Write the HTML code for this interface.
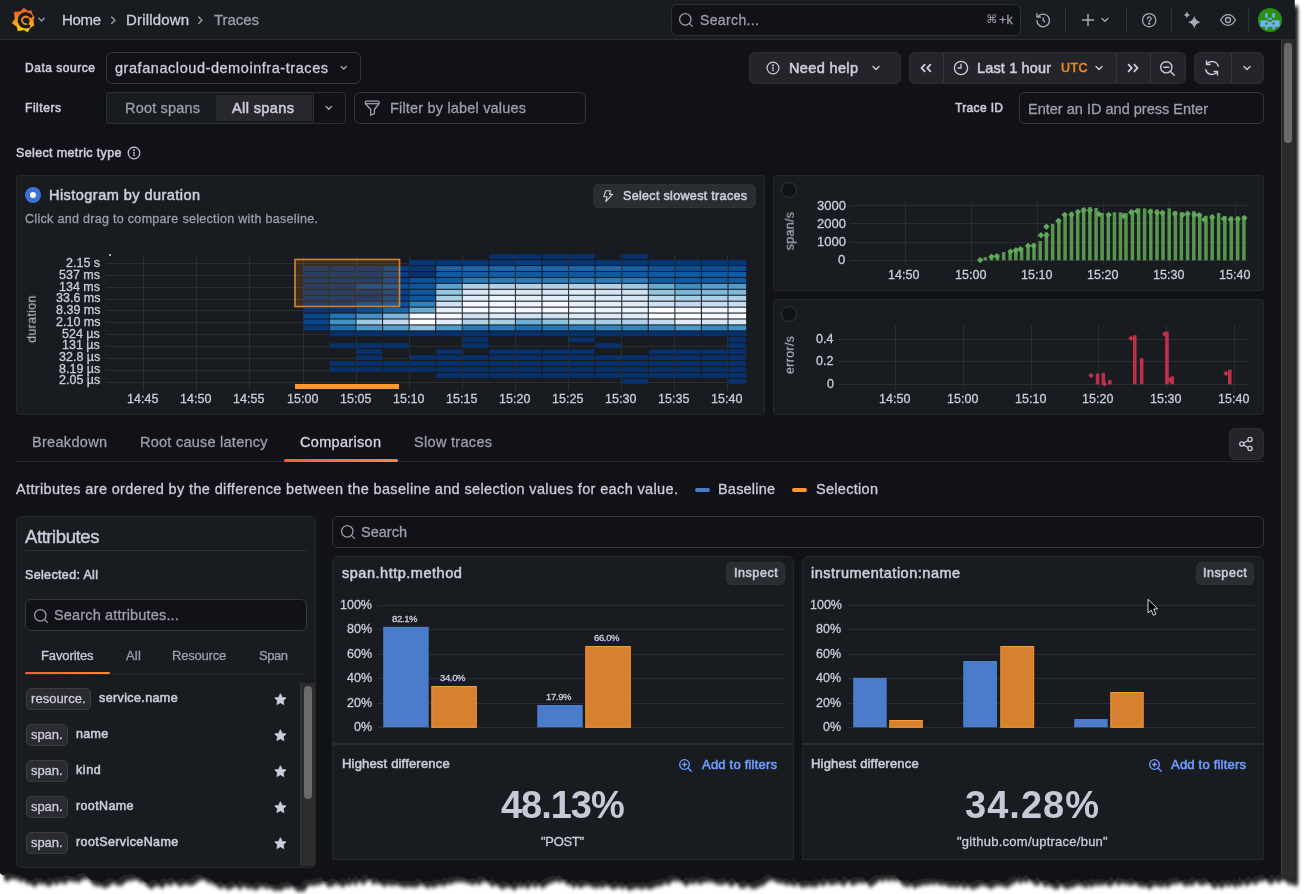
<!DOCTYPE html>
<html><head><meta charset="utf-8"><title>Drilldown Traces</title>
<style>
*{box-sizing:border-box;margin:0;padding:0}
html,body{width:1305px;height:894px;overflow:hidden;background:#fff}
body{font-family:"Liberation Sans",sans-serif;color:#ccccdc;font-size:14px;position:relative}
#app{position:absolute;left:0;top:0;width:1295px;height:894px;background:#111217;overflow:hidden}
.abs{position:absolute}
.t{position:absolute;white-space:nowrap;line-height:1}
.hdr{position:absolute;left:0;top:0;width:1295px;height:40px;background:#181b1f;border-bottom:1px solid #2a2c32}
.box{position:absolute;border:1px solid #34363d;border-radius:6px;background:#111217}
.btn{position:absolute;border:1px solid #2b2d33;border-radius:6px;background:#24252b}
.panel{position:absolute;border:1px solid #25272d;border-radius:3px;background:#181b1f}
.sec{color:#9a9ba8}
.b{font-weight:bold}
.vdiv{position:absolute;width:1px;background:#2f3137}
svg{position:absolute;overflow:visible}
.t{will-change:transform}
#app{clip-path:path("M0 0 L0 873.3 L0.0 873.3 L2.4 875.2 L4.6 874.9 L7.5 872.9 L10.7 873.3 L13.8 873.8 L16.1 875.8 L20.1 875.0 L22.7 877.8 L27.0 878.2 L30.0 880.5 L32.2 880.2 L34.9 877.2 L37.2 878.3 L41.2 878.3 L44.7 880.6 L47.6 879.6 L49.8 876.8 L52.3 879.3 L55.3 877.0 L58.8 877.0 L61.6 878.2 L65.3 874.8 L68.7 875.7 L72.9 876.1 L75.6 877.0 L77.9 874.0 L81.8 873.1 L85.1 873.6 L88.7 878.3 L92.2 880.0 L94.9 880.1 L98.4 880.7 L101.6 882.2 L105.9 879.8 L109.6 877.3 L113.3 879.5 L117.8 879.7 L120.5 877.2 L124.2 874.9 L127.4 875.1 L129.7 874.2 L133.6 874.1 L136.2 876.5 L140.4 876.8 L143.5 880.4 L147.7 882.9 L151.9 879.9 L154.9 880.1 L159.1 882.6 L161.5 878.6 L164.1 878.7 L167.3 880.1 L169.9 877.0 L173.0 878.5 L176.4 880.9 L180.1 878.4 L183.7 878.7 L185.8 879.5 L189.8 878.9 L193.8 876.1 L196.8 874.3 L200.3 873.9 L202.5 875.7 L204.9 877.5 L207.0 876.9 L209.4 878.6 L212.3 879.7 L216.5 883.0 L218.9 881.3 L221.8 881.8 L224.1 884.1 L228.5 882.3 L231.8 880.5 L234.0 881.7 L236.7 884.0 L239.1 880.2 L243.5 882.6 L245.8 882.7 L247.9 882.6 L252.3 884.2 L256.1 881.4 L259.0 881.0 L262.9 882.8 L266.9 881.9 L269.4 884.3 L273.9 884.6 L277.9 884.5 L281.8 881.8 L285.0 882.5 L287.1 880.9 L289.8 882.1 L293.6 885.5 L296.7 885.5 L301.1 885.1 L304.1 880.3 L306.6 879.0 L309.1 880.0 L313.4 879.1 L316.6 878.6 L320.6 876.4 L324.2 880.9 L328.2 880.6 L331.4 878.3 L335.4 879.1 L339.4 881.6 L342.3 878.5 L346.7 879.5 L349.1 876.3 L351.5 879.7 L355.5 875.5 L359.6 879.0 L363.2 875.5 L366.6 874.0 L368.6 878.6 L372.3 877.3 L376.6 878.0 L380.8 880.9 L383.3 878.8 L386.0 879.4 L389.5 879.7 L392.6 879.1 L396.8 880.2 L400.0 881.4 L404.2 880.7 L408.5 881.1 L411.9 881.3 L413.9 880.9 L416.4 878.8 L420.4 879.7 L423.5 882.4 L426.9 880.5 L430.2 881.7 L434.2 879.6 L437.6 879.2 L440.3 880.5 L443.6 878.1 L447.5 878.2 L450.6 876.5 L453.8 876.2 L457.6 876.1 L460.9 876.4 L465.2 877.7 L469.4 879.1 L472.1 877.4 L476.4 879.0 L478.8 875.7 L481.9 876.2 L484.5 876.7 L488.2 880.9 L492.4 878.8 L496.2 882.1 L498.6 883.6 L503.0 881.1 L507.4 881.8 L510.6 884.5 L514.7 880.3 L517.7 881.9 L520.6 880.3 L523.4 882.7 L525.4 881.8 L528.5 879.1 L531.4 881.9 L534.6 879.1 L539.1 882.4 L543.5 879.0 L546.2 877.8 L550.1 876.3 L552.5 875.4 L556.7 876.6 L559.4 874.9 L563.7 879.3 L567.4 879.0 L569.6 882.4 L572.7 879.5 L577.0 882.3 L581.0 879.7 L585.1 879.7 L589.3 881.6 L592.1 882.2 L596.5 880.9 L598.8 882.2 L601.4 880.2 L603.8 880.0 L606.3 881.3 L609.1 883.5 L611.8 882.3 L614.2 881.6 L616.3 881.2 L618.3 883.5 L621.7 881.0 L624.9 884.6 L627.1 884.0 L630.2 882.4 L634.3 882.0 L637.6 883.4 L642.0 881.7 L646.1 883.5 L649.7 882.0 L652.6 880.3 L654.9 880.4 L658.7 879.4 L661.2 877.4 L665.3 879.1 L668.9 874.9 L671.5 875.3 L674.7 875.2 L677.8 876.2 L682.2 880.4 L685.6 877.4 L690.0 878.1 L692.9 876.5 L695.8 878.6 L699.1 877.2 L702.4 876.1 L705.0 876.3 L708.0 875.9 L710.1 877.1 L712.6 878.3 L716.0 879.0 L719.6 878.6 L723.8 877.3 L726.6 880.7 L729.0 879.9 L732.6 877.3 L736.7 882.2 L740.3 882.1 L744.3 880.0 L747.6 882.4 L751.7 882.8 L755.8 880.4 L760.0 879.5 L763.7 876.0 L765.8 874.9 L768.7 874.0 L772.8 876.7 L776.4 877.6 L780.1 877.5 L782.1 879.3 L785.9 878.5 L789.3 879.7 L791.4 880.4 L794.1 877.6 L796.7 881.2 L799.3 881.6 L803.7 880.6 L806.7 880.2 L810.4 881.2 L813.9 880.3 L816.1 877.7 L818.7 880.3 L821.5 879.1 L823.5 876.5 L826.2 879.2 L829.9 878.8 L832.7 877.8 L835.8 877.3 L838.1 879.5 L840.6 880.0 L844.9 875.6 L848.1 879.7 L852.5 878.1 L855.2 877.1 L859.6 877.3 L863.0 877.1 L866.3 881.2 L868.6 880.0 L871.9 877.7 L875.7 874.5 L879.9 875.7 L882.0 873.4 L885.2 875.6 L888.0 874.1 L890.8 875.1 L894.9 874.5 L898.8 879.3 L901.1 880.2 L904.9 880.9 L907.6 878.9 L910.6 882.6 L914.1 880.2 L917.1 880.3 L919.3 879.0 L923.3 879.1 L927.7 878.1 L930.3 878.8 L932.8 877.6 L937.2 879.4 L941.2 878.8 L945.5 880.9 L948.9 880.4 L951.0 880.7 L954.2 881.3 L957.8 879.6 L959.9 883.0 L962.2 881.2 L965.1 880.5 L968.9 883.7 L971.6 882.1 L974.3 881.6 L977.3 879.6 L979.7 879.8 L984.0 881.1 L986.5 883.0 L991.0 880.8 L993.4 879.5 L995.6 880.2 L997.8 879.6 L1000.5 881.2 L1004.7 881.5 L1007.7 878.8 L1011.0 877.4 L1013.9 874.9 L1016.6 878.3 L1018.9 875.2 L1022.4 877.0 L1025.0 874.7 L1027.6 875.8 L1030.7 879.1 L1034.8 879.6 L1036.9 875.9 L1040.7 880.8 L1043.9 880.0 L1045.9 879.5 L1050.2 882.4 L1054.3 883.2 L1056.9 879.1 L1059.3 881.1 L1063.0 883.2 L1066.8 881.8 L1070.7 881.0 L1074.1 879.1 L1078.1 880.1 L1082.4 882.1 L1085.1 879.4 L1087.8 881.5 L1091.5 878.4 L1093.7 880.0 L1097.1 878.9 L1099.7 879.5 L1101.7 877.8 L1104.9 880.4 L1108.5 879.5 L1111.7 876.3 L1114.3 880.0 L1118.1 877.2 L1120.1 878.3 L1123.8 878.3 L1126.4 879.7 L1130.8 877.9 L1132.8 878.6 L1135.9 880.6 L1138.4 881.3 L1142.2 880.3 L1144.7 882.7 L1147.5 882.2 L1150.1 879.6 L1154.0 880.3 L1158.4 881.2 L1160.9 879.6 L1163.9 881.4 L1168.3 878.4 L1171.3 878.3 L1175.7 877.5 L1177.8 876.8 L1180.8 880.5 L1185.0 879.2 L1189.5 879.6 L1192.3 876.2 L1196.7 879.4 L1198.7 879.3 L1201.7 878.3 L1204.5 877.6 L1206.5 878.4 L1209.4 882.0 L1211.7 882.3 L1214.2 879.7 L1218.3 882.4 L1221.4 879.1 L1224.6 880.6 L1228.9 879.0 L1231.8 881.9 L1233.8 879.2 L1237.9 880.3 L1240.0 876.4 L1242.1 880.3 L1244.8 879.0 L1249.0 876.5 L1251.7 879.3 L1255.2 875.6 L1259.0 875.6 L1261.7 873.9 L1265.6 878.0 L1269.2 877.8 L1271.3 874.2 L1274.4 877.4 L1278.8 874.3 L1281.5 874.9 L1284.7 878.2 L1287.1 878.3 L1291.0 879.5 L1294.5 879.6 L1294.5 879.1 L1294.5 0 Z")}
</style></head>
<body>
<svg style="left:0;top:0" width="1305" height="894" viewBox="0 0 1305 894">
<defs><filter id="sh" x="-5%" y="-5%" width="110%" height="110%"><feGaussianBlur stdDeviation="1.8 2.3"/></filter></defs>
<path d="M0 0 L0 873.3 L0.0 873.3 L2.4 875.2 L4.6 874.9 L7.5 872.9 L10.7 873.3 L13.8 873.8 L16.1 875.8 L20.1 875.0 L22.7 877.8 L27.0 878.2 L30.0 880.5 L32.2 880.2 L34.9 877.2 L37.2 878.3 L41.2 878.3 L44.7 880.6 L47.6 879.6 L49.8 876.8 L52.3 879.3 L55.3 877.0 L58.8 877.0 L61.6 878.2 L65.3 874.8 L68.7 875.7 L72.9 876.1 L75.6 877.0 L77.9 874.0 L81.8 873.1 L85.1 873.6 L88.7 878.3 L92.2 880.0 L94.9 880.1 L98.4 880.7 L101.6 882.2 L105.9 879.8 L109.6 877.3 L113.3 879.5 L117.8 879.7 L120.5 877.2 L124.2 874.9 L127.4 875.1 L129.7 874.2 L133.6 874.1 L136.2 876.5 L140.4 876.8 L143.5 880.4 L147.7 882.9 L151.9 879.9 L154.9 880.1 L159.1 882.6 L161.5 878.6 L164.1 878.7 L167.3 880.1 L169.9 877.0 L173.0 878.5 L176.4 880.9 L180.1 878.4 L183.7 878.7 L185.8 879.5 L189.8 878.9 L193.8 876.1 L196.8 874.3 L200.3 873.9 L202.5 875.7 L204.9 877.5 L207.0 876.9 L209.4 878.6 L212.3 879.7 L216.5 883.0 L218.9 881.3 L221.8 881.8 L224.1 884.1 L228.5 882.3 L231.8 880.5 L234.0 881.7 L236.7 884.0 L239.1 880.2 L243.5 882.6 L245.8 882.7 L247.9 882.6 L252.3 884.2 L256.1 881.4 L259.0 881.0 L262.9 882.8 L266.9 881.9 L269.4 884.3 L273.9 884.6 L277.9 884.5 L281.8 881.8 L285.0 882.5 L287.1 880.9 L289.8 882.1 L293.6 885.5 L296.7 885.5 L301.1 885.1 L304.1 880.3 L306.6 879.0 L309.1 880.0 L313.4 879.1 L316.6 878.6 L320.6 876.4 L324.2 880.9 L328.2 880.6 L331.4 878.3 L335.4 879.1 L339.4 881.6 L342.3 878.5 L346.7 879.5 L349.1 876.3 L351.5 879.7 L355.5 875.5 L359.6 879.0 L363.2 875.5 L366.6 874.0 L368.6 878.6 L372.3 877.3 L376.6 878.0 L380.8 880.9 L383.3 878.8 L386.0 879.4 L389.5 879.7 L392.6 879.1 L396.8 880.2 L400.0 881.4 L404.2 880.7 L408.5 881.1 L411.9 881.3 L413.9 880.9 L416.4 878.8 L420.4 879.7 L423.5 882.4 L426.9 880.5 L430.2 881.7 L434.2 879.6 L437.6 879.2 L440.3 880.5 L443.6 878.1 L447.5 878.2 L450.6 876.5 L453.8 876.2 L457.6 876.1 L460.9 876.4 L465.2 877.7 L469.4 879.1 L472.1 877.4 L476.4 879.0 L478.8 875.7 L481.9 876.2 L484.5 876.7 L488.2 880.9 L492.4 878.8 L496.2 882.1 L498.6 883.6 L503.0 881.1 L507.4 881.8 L510.6 884.5 L514.7 880.3 L517.7 881.9 L520.6 880.3 L523.4 882.7 L525.4 881.8 L528.5 879.1 L531.4 881.9 L534.6 879.1 L539.1 882.4 L543.5 879.0 L546.2 877.8 L550.1 876.3 L552.5 875.4 L556.7 876.6 L559.4 874.9 L563.7 879.3 L567.4 879.0 L569.6 882.4 L572.7 879.5 L577.0 882.3 L581.0 879.7 L585.1 879.7 L589.3 881.6 L592.1 882.2 L596.5 880.9 L598.8 882.2 L601.4 880.2 L603.8 880.0 L606.3 881.3 L609.1 883.5 L611.8 882.3 L614.2 881.6 L616.3 881.2 L618.3 883.5 L621.7 881.0 L624.9 884.6 L627.1 884.0 L630.2 882.4 L634.3 882.0 L637.6 883.4 L642.0 881.7 L646.1 883.5 L649.7 882.0 L652.6 880.3 L654.9 880.4 L658.7 879.4 L661.2 877.4 L665.3 879.1 L668.9 874.9 L671.5 875.3 L674.7 875.2 L677.8 876.2 L682.2 880.4 L685.6 877.4 L690.0 878.1 L692.9 876.5 L695.8 878.6 L699.1 877.2 L702.4 876.1 L705.0 876.3 L708.0 875.9 L710.1 877.1 L712.6 878.3 L716.0 879.0 L719.6 878.6 L723.8 877.3 L726.6 880.7 L729.0 879.9 L732.6 877.3 L736.7 882.2 L740.3 882.1 L744.3 880.0 L747.6 882.4 L751.7 882.8 L755.8 880.4 L760.0 879.5 L763.7 876.0 L765.8 874.9 L768.7 874.0 L772.8 876.7 L776.4 877.6 L780.1 877.5 L782.1 879.3 L785.9 878.5 L789.3 879.7 L791.4 880.4 L794.1 877.6 L796.7 881.2 L799.3 881.6 L803.7 880.6 L806.7 880.2 L810.4 881.2 L813.9 880.3 L816.1 877.7 L818.7 880.3 L821.5 879.1 L823.5 876.5 L826.2 879.2 L829.9 878.8 L832.7 877.8 L835.8 877.3 L838.1 879.5 L840.6 880.0 L844.9 875.6 L848.1 879.7 L852.5 878.1 L855.2 877.1 L859.6 877.3 L863.0 877.1 L866.3 881.2 L868.6 880.0 L871.9 877.7 L875.7 874.5 L879.9 875.7 L882.0 873.4 L885.2 875.6 L888.0 874.1 L890.8 875.1 L894.9 874.5 L898.8 879.3 L901.1 880.2 L904.9 880.9 L907.6 878.9 L910.6 882.6 L914.1 880.2 L917.1 880.3 L919.3 879.0 L923.3 879.1 L927.7 878.1 L930.3 878.8 L932.8 877.6 L937.2 879.4 L941.2 878.8 L945.5 880.9 L948.9 880.4 L951.0 880.7 L954.2 881.3 L957.8 879.6 L959.9 883.0 L962.2 881.2 L965.1 880.5 L968.9 883.7 L971.6 882.1 L974.3 881.6 L977.3 879.6 L979.7 879.8 L984.0 881.1 L986.5 883.0 L991.0 880.8 L993.4 879.5 L995.6 880.2 L997.8 879.6 L1000.5 881.2 L1004.7 881.5 L1007.7 878.8 L1011.0 877.4 L1013.9 874.9 L1016.6 878.3 L1018.9 875.2 L1022.4 877.0 L1025.0 874.7 L1027.6 875.8 L1030.7 879.1 L1034.8 879.6 L1036.9 875.9 L1040.7 880.8 L1043.9 880.0 L1045.9 879.5 L1050.2 882.4 L1054.3 883.2 L1056.9 879.1 L1059.3 881.1 L1063.0 883.2 L1066.8 881.8 L1070.7 881.0 L1074.1 879.1 L1078.1 880.1 L1082.4 882.1 L1085.1 879.4 L1087.8 881.5 L1091.5 878.4 L1093.7 880.0 L1097.1 878.9 L1099.7 879.5 L1101.7 877.8 L1104.9 880.4 L1108.5 879.5 L1111.7 876.3 L1114.3 880.0 L1118.1 877.2 L1120.1 878.3 L1123.8 878.3 L1126.4 879.7 L1130.8 877.9 L1132.8 878.6 L1135.9 880.6 L1138.4 881.3 L1142.2 880.3 L1144.7 882.7 L1147.5 882.2 L1150.1 879.6 L1154.0 880.3 L1158.4 881.2 L1160.9 879.6 L1163.9 881.4 L1168.3 878.4 L1171.3 878.3 L1175.7 877.5 L1177.8 876.8 L1180.8 880.5 L1185.0 879.2 L1189.5 879.6 L1192.3 876.2 L1196.7 879.4 L1198.7 879.3 L1201.7 878.3 L1204.5 877.6 L1206.5 878.4 L1209.4 882.0 L1211.7 882.3 L1214.2 879.7 L1218.3 882.4 L1221.4 879.1 L1224.6 880.6 L1228.9 879.0 L1231.8 881.9 L1233.8 879.2 L1237.9 880.3 L1240.0 876.4 L1242.1 880.3 L1244.8 879.0 L1249.0 876.5 L1251.7 879.3 L1255.2 875.6 L1259.0 875.6 L1261.7 873.9 L1265.6 878.0 L1269.2 877.8 L1271.3 874.2 L1274.4 877.4 L1278.8 874.3 L1281.5 874.9 L1284.7 878.2 L1287.1 878.3 L1291.0 879.5 L1294.5 879.6 L1294.5 879.1 L1294.5 0 Z" transform="translate(3.800,6)" fill="#000" opacity="0.85" filter="url(#sh)"/>
</svg>
<div id="app">
<div class="hdr"></div>
<svg style="left:5px;top:2px" width="50" height="36" viewBox="0 0 1242 894">
<defs><linearGradient id="lg" gradientUnits="userSpaceOnUse" x1="0" y1="750" x2="0" y2="145"><stop offset="0" stop-color="#ffd70a"/><stop offset=".55" stop-color="#f78a1f"/><stop offset="1" stop-color="#f0562b"/></linearGradient></defs>
<path fill="url(#lg)" stroke="url(#lg)" stroke-width="14" stroke-linejoin="round" d="M470 150L565 222L655 218L672 295L722 372L700 455L716 580L622 640L560 745L470 690L322 716L302 612L176 520L252 422L230 252L372 244Z"/>
<path fill="none" stroke="#181b1f" stroke-width="88" stroke-linecap="round" d="M640 350A160 160 0 1 0 585 600"/>
<circle cx="525" cy="475" r="84" fill="#181b1f"/>
<path fill="none" stroke="#f9a015" stroke-width="34" stroke-linecap="round" d="M450 500Q470 560 530 545"/>
</svg>
<svg style="left:38.4px;top:17.4px" width="7.2" height="5.2" viewBox="-3.6 -2.6 7.2 5.2"><path d="M-2.6 -1.3L0 1.3L2.6 -1.3" fill="none" stroke="#9d9eab" stroke-width="1.4" stroke-linecap="round" stroke-linejoin="round"/></svg>
<div class="t" style="left:62.00px;top:12.35px;font-size:15px;color:#ccccdc;-webkit-text-stroke:0.3px;letter-spacing:-0.338px;">Home</div>
<svg style="left:109.7px;top:16.2px" width="6.6" height="8.6" viewBox="-3.3 -4.3 6.6 8.6"><path d="M-1.65 -3.3L1.65 0L-1.65 3.3" fill="none" stroke="#9d9eab" stroke-width="1.4" stroke-linecap="round" stroke-linejoin="round"/></svg>
<div class="t" style="left:126.00px;top:12.35px;font-size:15px;color:#ccccdc;-webkit-text-stroke:0.3px;letter-spacing:0.164px;">Drilldown</div>
<svg style="left:197.2px;top:16.2px" width="6.6" height="8.6" viewBox="-3.3 -4.3 6.6 8.6"><path d="M-1.65 -3.3L1.65 0L-1.65 3.3" fill="none" stroke="#9d9eab" stroke-width="1.4" stroke-linecap="round" stroke-linejoin="round"/></svg>
<div class="t" style="left:214.00px;top:12.35px;font-size:15px;color:#9d9eab;-webkit-text-stroke:0.3px;letter-spacing:-0.057px;">Traces</div>
<div class="box" style="left:671px;top:4px;width:350px;height:32px;border-color:#2e3036"></div>
<svg style="left:678px;top:12px" width="16" height="16" viewBox="-8 -8 16 16"><circle cx="-0.7" cy="-0.7" r="5.7" fill="none" stroke="#9d9eab" stroke-width="1.25"/><path d="M3.3298999999999994 3.3298999999999994L6.4 6.4" stroke="#9d9eab" stroke-width="1.25" stroke-linecap="round"/></svg>
<div class="t" style="left:700.00px;top:12.86px;font-size:14px;color:#9d9eab;-webkit-text-stroke:0.3px;letter-spacing:0.372px;">Search...</div>
<div class="t" style="left:986.200px;top:13.800px;font-size:11.500px;color:#9d9eab;font-family:'DejaVu Sans',sans-serif">&#8984;</div>
<div class="t" style="left:998.60px;top:13.62px;font-size:12.5px;color:#9d9eab;-webkit-text-stroke:0.3px;letter-spacing:0.250px;">+k</div>
<svg style="left:1034.800px;top:11.500px" width="16.400" height="16.400" viewBox="0 0 18 18" fill="none" stroke="#a9aab8" stroke-width="1.500" stroke-linecap="round" stroke-linejoin="round">
<path d="M3.300 5.200A7 7 0 1 1 2 9.400"/><path d="M2.200 1.800v3.700h3.700"/><path d="M9 6.500V9.300l1.600 1.200"/></svg>
<div class="vdiv" style="left:1065px;top:8px;height:24px"></div>
<svg style="left:1082px;top:14px" width="12" height="12" viewBox="0 0 12 12"><path d="M6 .5v11M.5 6h11" stroke="#a9aab8" stroke-width="1.500" stroke-linecap="round"/></svg>
<svg style="left:1100.6px;top:17.1px" width="7.8" height="5.8" viewBox="-3.9 -2.9 7.8 5.8"><path d="M-2.9 -1.45L0 1.45L2.9 -1.45" fill="none" stroke="#a9aab8" stroke-width="1.3" stroke-linecap="round" stroke-linejoin="round"/></svg>
<div class="vdiv" style="left:1126px;top:8px;height:24px"></div>
<svg style="left:1140.600px;top:11.800px" width="16.400" height="16.400" viewBox="0 0 18 18" fill="none" stroke="#a9aab8" stroke-width="1.400" stroke-linecap="round"><circle cx="9" cy="9" r="7.300"/><path d="M7.100 7.400a2 2 0 1 1 2.900 1.700c-.7.400-1 .8-1 1.500"/><circle cx="9" cy="12.700" r=".6" fill="#a9aab8"/></svg>
<div class="vdiv" style="left:1171px;top:8px;height:24px"></div>
<svg style="left:0;top:0" width="1295" height="40" viewBox="0 0 1295 40"><path d="M1194.3 15.799999999999999Q1195.3239999999998 21.176 1200.7 22.2Q1195.3239999999998 23.224 1194.3 28.6Q1193.276 23.224 1187.8999999999999 22.2Q1193.276 21.176 1194.3 15.799999999999999ZM1186.9 11.600000000000001Q1187.428 14.372 1190.2 14.9Q1187.428 15.428 1186.9 18.2Q1186.372 15.428 1183.6000000000001 14.9Q1186.372 14.372 1186.9 11.600000000000001Z" fill="#a9aab8"/></svg>
<svg style="left:1218px;top:10px" width="20" height="20" viewBox="1218 10 20 20" fill="none" stroke="#a9aab8" stroke-width="1.300"><path d="M1220.600 20C1222.700 16.300 1225.200 14.700 1228 14.700S1233.300 16.300 1235.400 20C1233.300 23.700 1230.800 25.300 1228 25.300S1222.700 23.700 1220.600 20Z" stroke-linejoin="round"/><circle cx="1228" cy="20" r="2.500"/></svg>
<div class="vdiv" style="left:1248px;top:8px;height:24px"></div>
<svg style="left:1258px;top:8px" width="24" height="24" viewBox="0 0 24 24"><defs><clipPath id="av"><circle cx="12" cy="12" r="12"/></clipPath></defs>
<circle cx="12" cy="12" r="12.050" fill="#2a8f10"/><g clip-path="url(#av)" fill="#73b0fb"><rect x="2.400" y="12.300" width="19.200" height="6.500"/><rect x="7.200" y="5.100" width="2.450" height="4.550"/><rect x="14.400" y="5.100" width="2.450" height="4.550"/><rect x="9.800" y="10" width="4.200" height="1.550"/><rect x="7.200" y="18.700" width="2.450" height="2.550"/><rect x="14.400" y="18.700" width="2.450" height="2.550"/></g>
<g fill="#2a8f10"><circle cx="8.350" cy="15.550" r="1.250"/><circle cx="15.550" cy="15.550" r="1.250"/><rect x="9.800" y="12.200" width="4.200" height="1.600"/></g></svg>
<div class="t" style="left:25.00px;top:61.88px;font-size:12px;color:#ccccdc;-webkit-text-stroke:0.55px;letter-spacing:0.530px;">Data source</div>
<div class="box" style="left:106px;top:52px;width:255px;height:32px"></div>
<div class="t" style="left:115.00px;top:60.60px;font-size:14.5px;color:#ccccdc;-webkit-text-stroke:0.3px;letter-spacing:0.555px;">grafanacloud-demoinfra-traces</div>
<svg style="left:339.8px;top:65.3px" width="7.4" height="5.4" viewBox="-3.7 -2.7 7.4 5.4"><path d="M-2.7 -1.35L0 1.35L2.7 -1.35" fill="none" stroke="#a9aab7" stroke-width="1.3" stroke-linecap="round" stroke-linejoin="round"/></svg>
<div class="t" style="left:25.00px;top:101.88px;font-size:12px;color:#ccccdc;-webkit-text-stroke:0.55px;letter-spacing:0.556px;">Filters</div>
<div class="box" style="left:106px;top:92px;width:240px;height:32px;border-radius:3px;background:#181b1f;border-color:#2e3036"></div>
<div class="abs" style="left:216px;top:95px;width:96px;height:26px;background:#26282e;border-radius:3px"></div>
<div class="t" style="left:125.00px;top:100.61px;font-size:14.5px;color:#9d9eab;-webkit-text-stroke:0.3px;letter-spacing:0.184px;">Root spans</div>
<div class="t" style="left:232.00px;top:100.61px;font-size:14.5px;color:#ccccdc;-webkit-text-stroke:0.55px;letter-spacing:0.396px;">All spans</div>
<div class="abs" style="left:313px;top:93px;width:32px;height:30px;background:#111217;border-left:1px solid #2e3036;border-radius:0 2px 2px 0"></div>
<svg style="left:324.9px;top:105.2px" width="7.6" height="5.6" viewBox="-3.8 -2.8 7.6 5.6"><path d="M-2.8 -1.4L0 1.4L2.8 -1.4" fill="none" stroke="#b4b5c3" stroke-width="1.3" stroke-linecap="round" stroke-linejoin="round"/></svg>
<div class="box" style="left:354px;top:92px;width:232px;height:32px"></div>
<svg style="left:360px;top:96px" width="24" height="24" viewBox="360 96 24 24" fill="none" stroke="#a4a5b2" stroke-width="1.250" stroke-linejoin="round"><path d="M365.300 102.300Q365.300 101 366.600 101H377.800Q379.100 101 379.100 102.300V103.500L374.400 109.500V113.600L370.700 115.200V109.500L365.300 103.500Z"/><path d="M365.600 103.700H378.800"/></svg>
<div class="t" style="left:390.00px;top:100.61px;font-size:14.5px;color:#9d9eab;-webkit-text-stroke:0.3px;letter-spacing:0.182px;">Filter by label values</div>
<div class="btn" style="left:749px;top:52px;width:152px;height:32px"></div>
<svg style="left:766px;top:61px" width="14" height="14" viewBox="0 0 14 14" fill="none" stroke="#ccccdc" stroke-width="1.200"><circle cx="7" cy="7" r="5.900"/><path d="M7 6.300v3.500" stroke-linecap="round"/><circle cx="7" cy="4.300" r=".4" fill="#ccccdc"/></svg>
<div class="t" style="left:789.00px;top:60.60px;font-size:14.5px;color:#ccccdc;-webkit-text-stroke:0.55px;letter-spacing:0.362px;">Need help</div>
<svg style="left:872px;top:65.2px" width="8" height="6" viewBox="-4 -3 8 6"><path d="M-3 -1.5L0 1.5L3 -1.5" fill="none" stroke="#ccccdc" stroke-width="1.4" stroke-linecap="round" stroke-linejoin="round"/></svg>
<div class="btn" style="left:909px;top:52px;width:277px;height:32px"></div>
<div class="vdiv" style="left:943px;top:53px;height:30px;background:#34363c"></div>
<div class="vdiv" style="left:1116px;top:53px;height:30px;background:#34363c"></div>
<div class="vdiv" style="left:1150px;top:53px;height:30px;background:#34363c"></div>
<svg style="left:917.6px;top:63px" width="16" height="10" viewBox="-8 -5 16 10" fill="none" stroke="#ccccdc" stroke-width="1.800" stroke-linecap="round" stroke-linejoin="round"><path d="M-1.30 -3.3L-4.50 0L-1.30 3.3M4.40 -3.3L1.20 0L4.40 3.3"/></svg>
<svg style="left:1125.2px;top:63px" width="16" height="10" viewBox="-8 -5 16 10" fill="none" stroke="#ccccdc" stroke-width="1.800" stroke-linecap="round" stroke-linejoin="round"><path d="M1.30 -3.3L4.50 0L1.30 3.3M-4.40 -3.3L-1.20 0L-4.40 3.3"/></svg>
<svg style="left:953px;top:60px" width="16" height="16" viewBox="0 0 16 16" fill="none" stroke="#ccccdc" stroke-width="1.300" stroke-linecap="round" stroke-linejoin="round"><circle cx="8" cy="8" r="6.600"/><path d="M8 4.200V8H5"/></svg>
<div class="t" style="left:977.00px;top:60.60px;font-size:14.5px;color:#ccccdc;-webkit-text-stroke:0.55px;letter-spacing:0.145px;">Last 1 hour</div>
<div class="t" style="left:1060.50px;top:61.62px;font-size:12.5px;color:#f58b1f;-webkit-text-stroke:0.55px;letter-spacing:0.405px;">UTC</div>
<svg style="left:1094.5px;top:65.2px" width="8" height="6" viewBox="-4 -3 8 6"><path d="M-3 -1.5L0 1.5L3 -1.5" fill="none" stroke="#ccccdc" stroke-width="1.4" stroke-linecap="round" stroke-linejoin="round"/></svg>
<svg style="left:1159px;top:60px" width="17" height="17" viewBox="0 0 17 17" fill="none" stroke="#ccccdc" stroke-width="1.400" stroke-linecap="round"><circle cx="7.300" cy="7.300" r="5.600"/><path d="M11.500 11.500L15.300 15.300M4.800 7.300h5"/></svg>
<div class="btn" style="left:1194px;top:52px;width:70px;height:32px"></div>
<div class="vdiv" style="left:1230.500px;top:53px;height:30px;background:#34363c"></div>
<svg style="left:1203px;top:59px" width="18" height="18" viewBox="0 0 18 18" fill="none" stroke="#ccccdc" stroke-width="1.400" stroke-linecap="round" stroke-linejoin="round"><path d="M15.300 7.200A6.500 6.500 0 0 0 3.800 5.200"/><path d="M2.700 10.800A6.500 6.500 0 0 0 14.200 12.800"/><path d="M3.500 2v3.500H7M14.500 16v-3.500H11"/></svg>
<svg style="left:1243px;top:65.2px" width="8" height="6" viewBox="-4 -3 8 6"><path d="M-3 -1.5L0 1.5L3 -1.5" fill="none" stroke="#ccccdc" stroke-width="1.4" stroke-linecap="round" stroke-linejoin="round"/></svg>
<div class="t" style="left:955.00px;top:101.88px;font-size:12px;color:#ccccdc;-webkit-text-stroke:0.55px;letter-spacing:0.348px;">Trace ID</div>
<div class="box" style="left:1019px;top:92px;width:245px;height:32px"></div>
<div class="t" style="left:1028.00px;top:102.11px;font-size:14.5px;color:#9d9eab;-webkit-text-stroke:0.3px;letter-spacing:0.010px;">Enter an ID and press Enter</div>
<div class="t" style="left:16.00px;top:146.62px;font-size:12.5px;color:#ccccdc;-webkit-text-stroke:0.55px;letter-spacing:0.362px;">Select metric type</div>
<svg style="left:127px;top:146px" width="14" height="14" viewBox="0 0 14 14" fill="none" stroke="#ccccdc" stroke-width="1.200"><circle cx="7" cy="7" r="5.800"/><path d="M7 6.300v3.400" stroke-linecap="round"/><circle cx="7" cy="4.300" r=".4" fill="#ccccdc"/></svg>
<div class="panel" style="left:16px;top:175px;width:749px;height:240px"></div>
<div class="abs" style="left:25px;top:187px;width:16px;height:16px;border-radius:50%;background:#3d71d9"></div><div class="abs" style="left:30px;top:192px;width:6px;height:6px;border-radius:50%;background:#fff"></div>
<div class="t" style="left:49.00px;top:187.60px;font-size:14.5px;color:#ccccdc;-webkit-text-stroke:0.55px;letter-spacing:0.458px;">Histogram by duration</div>
<div class="t" style="left:25.00px;top:213.32px;font-size:12.5px;color:#9d9eab;-webkit-text-stroke:0.3px;letter-spacing:0.308px;">Click and drag to compare selection with baseline.</div>
<div class="btn" style="left:593px;top:184px;width:163px;height:24px;border-radius:5px;background:#2a2d32;border-color:#2f3137"></div>
<svg style="left:600px;top:186px" width="16" height="20" viewBox="600 186 16 20" fill="none" stroke="#ccccdc" stroke-width="1.100" stroke-linejoin="round"><path d="M605.800 190.800H610.400L609.600 194.400H612.500L605.800 201.500L607.100 196.700H603.800Z"/></svg>
<div class="t" style="left:623.00px;top:189.62px;font-size:12.5px;color:#ccccdc;-webkit-text-stroke:0.55px;letter-spacing:0.330px;">Select slowest traces</div>
<svg style="left:0;top:0" width="1295" height="894" viewBox="0 0 1295 894" shape-rendering="crispEdges">
<rect x="106" y="263" width="641" height="1" fill="#2b2d33"/>
<rect x="106" y="275" width="641" height="1" fill="#2b2d33"/>
<rect x="106" y="287" width="641" height="1" fill="#2b2d33"/>
<rect x="106" y="299" width="641" height="1" fill="#2b2d33"/>
<rect x="106" y="310" width="641" height="1" fill="#2b2d33"/>
<rect x="106" y="322" width="641" height="1" fill="#2b2d33"/>
<rect x="106" y="334" width="641" height="1" fill="#2b2d33"/>
<rect x="106" y="346" width="641" height="1" fill="#2b2d33"/>
<rect x="106" y="358" width="641" height="1" fill="#2b2d33"/>
<rect x="106" y="370" width="641" height="1" fill="#2b2d33"/>
<rect x="106" y="382" width="641" height="1" fill="#2b2d33"/>
<rect x="143" y="255" width="1" height="135" fill="#2b2d33"/>
<rect x="196" y="255" width="1" height="135" fill="#2b2d33"/>
<rect x="249" y="255" width="1" height="135" fill="#2b2d33"/>
<rect x="303" y="255" width="1" height="135" fill="#2b2d33"/>
<rect x="356" y="255" width="1" height="135" fill="#2b2d33"/>
<rect x="409" y="255" width="1" height="135" fill="#2b2d33"/>
<rect x="462" y="255" width="1" height="135" fill="#2b2d33"/>
<rect x="515" y="255" width="1" height="135" fill="#2b2d33"/>
<rect x="568" y="255" width="1" height="135" fill="#2b2d33"/>
<rect x="621" y="255" width="1" height="135" fill="#2b2d33"/>
<rect x="674" y="255" width="1" height="135" fill="#2b2d33"/>
<rect x="727" y="255" width="1" height="135" fill="#2b2d33"/>
<rect x="109" y="254" width="2" height="2" fill="#b0b0b8"/>
<g shape-rendering="auto">
<rect x="489.39" y="254.20" width="25.5" height="4.85" fill="#08306b"/>
<rect x="515.96" y="254.20" width="25.5" height="4.85" fill="#08306b"/>
<rect x="542.53" y="254.20" width="25.5" height="4.85" fill="#08306b"/>
<rect x="569.10" y="254.20" width="25.5" height="4.85" fill="#08306b"/>
<rect x="622.24" y="254.20" width="25.5" height="4.85" fill="#08306b"/>
<rect x="409.68" y="260.14" width="25.5" height="4.85" fill="#083775"/>
<rect x="436.25" y="260.14" width="25.5" height="4.85" fill="#083775"/>
<rect x="462.82" y="260.14" width="25.5" height="4.85" fill="#083775"/>
<rect x="489.39" y="260.14" width="25.5" height="4.85" fill="#083775"/>
<rect x="515.96" y="260.14" width="25.5" height="4.85" fill="#083d7f"/>
<rect x="542.53" y="260.14" width="25.5" height="4.85" fill="#083775"/>
<rect x="569.10" y="260.14" width="25.5" height="4.85" fill="#083775"/>
<rect x="595.67" y="260.14" width="25.5" height="4.85" fill="#083775"/>
<rect x="622.24" y="260.14" width="25.5" height="4.85" fill="#083775"/>
<rect x="648.81" y="260.14" width="25.5" height="4.85" fill="#083775"/>
<rect x="675.38" y="260.14" width="25.5" height="4.85" fill="#083775"/>
<rect x="701.95" y="260.14" width="25.5" height="4.85" fill="#083775"/>
<rect x="728.52" y="260.14" width="17.6" height="4.85" fill="#083775"/>
<rect x="303.40" y="266.08" width="25.5" height="4.85" fill="#08306b"/>
<rect x="329.97" y="266.08" width="25.5" height="4.85" fill="#08306b"/>
<rect x="356.54" y="266.08" width="25.5" height="4.85" fill="#08306b"/>
<rect x="383.11" y="266.08" width="25.5" height="4.85" fill="#084084"/>
<rect x="409.68" y="266.08" width="25.5" height="4.85" fill="#083775"/>
<rect x="436.25" y="266.08" width="25.5" height="4.85" fill="#1764ab"/>
<rect x="462.82" y="266.08" width="25.5" height="4.85" fill="#1a67ae"/>
<rect x="489.39" y="266.08" width="25.5" height="4.85" fill="#1a67ae"/>
<rect x="515.96" y="266.08" width="25.5" height="4.85" fill="#1a67ae"/>
<rect x="542.53" y="266.08" width="25.5" height="4.85" fill="#1a67ae"/>
<rect x="569.10" y="266.08" width="25.5" height="4.85" fill="#1a67ae"/>
<rect x="595.67" y="266.08" width="25.5" height="4.85" fill="#1a67ae"/>
<rect x="622.24" y="266.08" width="25.5" height="4.85" fill="#1461a8"/>
<rect x="648.81" y="266.08" width="25.5" height="4.85" fill="#0b549e"/>
<rect x="675.38" y="266.08" width="25.5" height="4.85" fill="#08519c"/>
<rect x="701.95" y="266.08" width="25.5" height="4.85" fill="#08519c"/>
<rect x="728.52" y="266.08" width="17.6" height="4.85" fill="#08519c"/>
<rect x="303.40" y="272.02" width="25.5" height="4.85" fill="#08306b"/>
<rect x="329.97" y="272.02" width="25.5" height="4.85" fill="#08306b"/>
<rect x="356.54" y="272.02" width="25.5" height="4.85" fill="#08306b"/>
<rect x="383.11" y="272.02" width="25.5" height="4.85" fill="#084084"/>
<rect x="409.68" y="272.02" width="25.5" height="4.85" fill="#08306b"/>
<rect x="436.25" y="272.02" width="25.5" height="4.85" fill="#105ba4"/>
<rect x="462.82" y="272.02" width="25.5" height="4.85" fill="#125ea6"/>
<rect x="489.39" y="272.02" width="25.5" height="4.85" fill="#125ea6"/>
<rect x="515.96" y="272.02" width="25.5" height="4.85" fill="#105ba4"/>
<rect x="542.53" y="272.02" width="25.5" height="4.85" fill="#105ba4"/>
<rect x="569.10" y="272.02" width="25.5" height="4.85" fill="#105ba4"/>
<rect x="595.67" y="272.02" width="25.5" height="4.85" fill="#105ba4"/>
<rect x="622.24" y="272.02" width="25.5" height="4.85" fill="#105ba4"/>
<rect x="648.81" y="272.02" width="25.5" height="4.85" fill="#105ba4"/>
<rect x="675.38" y="272.02" width="25.5" height="4.85" fill="#105ba4"/>
<rect x="701.95" y="272.02" width="25.5" height="4.85" fill="#105ba4"/>
<rect x="728.52" y="272.02" width="17.6" height="4.85" fill="#105ba4"/>
<rect x="303.40" y="277.96" width="25.5" height="4.85" fill="#08306b"/>
<rect x="329.97" y="277.96" width="25.5" height="4.85" fill="#08306b"/>
<rect x="356.54" y="277.96" width="25.5" height="4.85" fill="#08306b"/>
<rect x="383.11" y="277.96" width="25.5" height="4.85" fill="#084084"/>
<rect x="409.68" y="277.96" width="25.5" height="4.85" fill="#08519c"/>
<rect x="436.25" y="277.96" width="25.5" height="4.85" fill="#105ba4"/>
<rect x="462.82" y="277.96" width="25.5" height="4.85" fill="#2b7bba"/>
<rect x="489.39" y="277.96" width="25.5" height="4.85" fill="#2b7bba"/>
<rect x="515.96" y="277.96" width="25.5" height="4.85" fill="#2b7bba"/>
<rect x="542.53" y="277.96" width="25.5" height="4.85" fill="#2b7bba"/>
<rect x="569.10" y="277.96" width="25.5" height="4.85" fill="#2b7bba"/>
<rect x="595.67" y="277.96" width="25.5" height="4.85" fill="#2b7bba"/>
<rect x="622.24" y="277.96" width="25.5" height="4.85" fill="#2b7bba"/>
<rect x="648.81" y="277.96" width="25.5" height="4.85" fill="#105ba4"/>
<rect x="675.38" y="277.96" width="25.5" height="4.85" fill="#105ba4"/>
<rect x="701.95" y="277.96" width="25.5" height="4.85" fill="#105ba4"/>
<rect x="728.52" y="277.96" width="17.6" height="4.85" fill="#105ba4"/>
<rect x="303.40" y="283.90" width="25.5" height="4.85" fill="#08306b"/>
<rect x="329.97" y="283.90" width="25.5" height="4.85" fill="#08306b"/>
<rect x="356.54" y="283.90" width="25.5" height="4.85" fill="#08478d"/>
<rect x="383.11" y="283.90" width="25.5" height="4.85" fill="#08519c"/>
<rect x="409.68" y="283.90" width="25.5" height="4.85" fill="#0d57a1"/>
<rect x="436.25" y="283.90" width="25.5" height="4.85" fill="#5ba3d0"/>
<rect x="462.82" y="283.90" width="25.5" height="4.85" fill="#b2d2e8"/>
<rect x="489.39" y="283.90" width="25.5" height="4.85" fill="#b2d2e8"/>
<rect x="515.96" y="283.90" width="25.5" height="4.85" fill="#b2d2e8"/>
<rect x="542.53" y="283.90" width="25.5" height="4.85" fill="#b2d2e8"/>
<rect x="569.10" y="283.90" width="25.5" height="4.85" fill="#b2d2e8"/>
<rect x="595.67" y="283.90" width="25.5" height="4.85" fill="#b2d2e8"/>
<rect x="622.24" y="283.90" width="25.5" height="4.85" fill="#9ecae1"/>
<rect x="648.81" y="283.90" width="25.5" height="4.85" fill="#67abd4"/>
<rect x="675.38" y="283.90" width="25.5" height="4.85" fill="#3f8fc4"/>
<rect x="701.95" y="283.90" width="25.5" height="4.85" fill="#56a0ce"/>
<rect x="728.52" y="283.90" width="17.6" height="4.85" fill="#529dcc"/>
<rect x="303.40" y="289.84" width="25.5" height="4.85" fill="#08306b"/>
<rect x="329.97" y="289.84" width="25.5" height="4.85" fill="#08306b"/>
<rect x="356.54" y="289.84" width="25.5" height="4.85" fill="#08306b"/>
<rect x="383.11" y="289.84" width="25.5" height="4.85" fill="#084084"/>
<rect x="409.68" y="289.84" width="25.5" height="4.85" fill="#0d57a1"/>
<rect x="436.25" y="289.84" width="25.5" height="4.85" fill="#94c4df"/>
<rect x="462.82" y="289.84" width="25.5" height="4.85" fill="#d4e5f4"/>
<rect x="489.39" y="289.84" width="25.5" height="4.85" fill="#deebf7"/>
<rect x="515.96" y="289.84" width="25.5" height="4.85" fill="#d4e5f4"/>
<rect x="542.53" y="289.84" width="25.5" height="4.85" fill="#d4e5f4"/>
<rect x="569.10" y="289.84" width="25.5" height="4.85" fill="#deebf7"/>
<rect x="595.67" y="289.84" width="25.5" height="4.85" fill="#d4e5f4"/>
<rect x="622.24" y="289.84" width="25.5" height="4.85" fill="#d2e3f3"/>
<rect x="648.81" y="289.84" width="25.5" height="4.85" fill="#94c4df"/>
<rect x="675.38" y="289.84" width="25.5" height="4.85" fill="#7ab6d9"/>
<rect x="701.95" y="289.84" width="25.5" height="4.85" fill="#7fb9da"/>
<rect x="728.52" y="289.84" width="17.6" height="4.85" fill="#7fb9da"/>
<rect x="303.40" y="295.78" width="25.5" height="4.85" fill="#08306b"/>
<rect x="329.97" y="295.78" width="25.5" height="4.85" fill="#08306b"/>
<rect x="356.54" y="295.78" width="25.5" height="4.85" fill="#08306b"/>
<rect x="383.11" y="295.78" width="25.5" height="4.85" fill="#084084"/>
<rect x="409.68" y="295.78" width="25.5" height="4.85" fill="#0d57a1"/>
<rect x="436.25" y="295.78" width="25.5" height="4.85" fill="#aacfe5"/>
<rect x="462.82" y="295.78" width="25.5" height="4.85" fill="#e0edf8"/>
<rect x="489.39" y="295.78" width="25.5" height="4.85" fill="#edf5fc"/>
<rect x="515.96" y="295.78" width="25.5" height="4.85" fill="#e3eef9"/>
<rect x="542.53" y="295.78" width="25.5" height="4.85" fill="#e3eef9"/>
<rect x="569.10" y="295.78" width="25.5" height="4.85" fill="#d9e8f5"/>
<rect x="595.67" y="295.78" width="25.5" height="4.85" fill="#d9e8f5"/>
<rect x="622.24" y="295.78" width="25.5" height="4.85" fill="#d7e6f5"/>
<rect x="648.81" y="295.78" width="25.5" height="4.85" fill="#bed8ec"/>
<rect x="675.38" y="295.78" width="25.5" height="4.85" fill="#a6cde4"/>
<rect x="701.95" y="295.78" width="25.5" height="4.85" fill="#aed1e7"/>
<rect x="728.52" y="295.78" width="17.6" height="4.85" fill="#aed1e7"/>
<rect x="303.40" y="301.72" width="25.5" height="4.85" fill="#08306b"/>
<rect x="329.97" y="301.72" width="25.5" height="4.85" fill="#08306b"/>
<rect x="356.54" y="301.72" width="25.5" height="4.85" fill="#08478d"/>
<rect x="383.11" y="301.72" width="25.5" height="4.85" fill="#08519c"/>
<rect x="409.68" y="301.72" width="25.5" height="4.85" fill="#3282be"/>
<rect x="436.25" y="301.72" width="25.5" height="4.85" fill="#d0e1f2"/>
<rect x="462.82" y="301.72" width="25.5" height="4.85" fill="#f2f8fd"/>
<rect x="489.39" y="301.72" width="25.5" height="4.85" fill="#f2f8fd"/>
<rect x="515.96" y="301.72" width="25.5" height="4.85" fill="#eaf3fb"/>
<rect x="542.53" y="301.72" width="25.5" height="4.85" fill="#f2f8fd"/>
<rect x="569.10" y="301.72" width="25.5" height="4.85" fill="#e6f0f9"/>
<rect x="595.67" y="301.72" width="25.5" height="4.85" fill="#e6f0f9"/>
<rect x="622.24" y="301.72" width="25.5" height="4.85" fill="#deebf7"/>
<rect x="648.81" y="301.72" width="25.5" height="4.85" fill="#d0e1f2"/>
<rect x="675.38" y="301.72" width="25.5" height="4.85" fill="#c6dbef"/>
<rect x="701.95" y="301.72" width="25.5" height="4.85" fill="#c8ddf0"/>
<rect x="728.52" y="301.72" width="17.6" height="4.85" fill="#c8ddf0"/>
<rect x="303.40" y="307.66" width="25.5" height="4.85" fill="#083775"/>
<rect x="329.97" y="307.66" width="25.5" height="4.85" fill="#083775"/>
<rect x="356.54" y="307.66" width="25.5" height="4.85" fill="#084e97"/>
<rect x="383.11" y="307.66" width="25.5" height="4.85" fill="#1a67ae"/>
<rect x="409.68" y="307.66" width="25.5" height="4.85" fill="#67abd4"/>
<rect x="436.25" y="307.66" width="25.5" height="4.85" fill="#e6f0f9"/>
<rect x="462.82" y="307.66" width="25.5" height="4.85" fill="#f2f8fd"/>
<rect x="489.39" y="307.66" width="25.5" height="4.85" fill="#f2f8fd"/>
<rect x="515.96" y="307.66" width="25.5" height="4.85" fill="#f2f8fd"/>
<rect x="542.53" y="307.66" width="25.5" height="4.85" fill="#f2f8fd"/>
<rect x="569.10" y="307.66" width="25.5" height="4.85" fill="#f2f8fd"/>
<rect x="595.67" y="307.66" width="25.5" height="4.85" fill="#edf5fc"/>
<rect x="622.24" y="307.66" width="25.5" height="4.85" fill="#edf5fc"/>
<rect x="648.81" y="307.66" width="25.5" height="4.85" fill="#ffffff"/>
<rect x="675.38" y="307.66" width="25.5" height="4.85" fill="#f4f9fe"/>
<rect x="701.95" y="307.66" width="25.5" height="4.85" fill="#f0f6fd"/>
<rect x="728.52" y="307.66" width="17.6" height="4.85" fill="#f0f6fd"/>
<rect x="303.40" y="313.60" width="25.5" height="4.85" fill="#08478d"/>
<rect x="329.97" y="313.60" width="25.5" height="4.85" fill="#2474b7"/>
<rect x="356.54" y="313.60" width="25.5" height="4.85" fill="#4292c6"/>
<rect x="383.11" y="313.60" width="25.5" height="4.85" fill="#7ab6d9"/>
<rect x="409.68" y="313.60" width="25.5" height="4.85" fill="#f7fbff"/>
<rect x="436.25" y="313.60" width="25.5" height="4.85" fill="#f2f8fd"/>
<rect x="462.82" y="313.60" width="25.5" height="4.85" fill="#d0e1f2"/>
<rect x="489.39" y="313.60" width="25.5" height="4.85" fill="#dce9f6"/>
<rect x="515.96" y="313.60" width="25.5" height="4.85" fill="#d2e3f3"/>
<rect x="542.53" y="313.60" width="25.5" height="4.85" fill="#d2e3f3"/>
<rect x="569.10" y="313.60" width="25.5" height="4.85" fill="#dce9f6"/>
<rect x="595.67" y="313.60" width="25.5" height="4.85" fill="#deebf7"/>
<rect x="622.24" y="313.60" width="25.5" height="4.85" fill="#deebf7"/>
<rect x="648.81" y="313.60" width="25.5" height="4.85" fill="#fdfeff"/>
<rect x="675.38" y="313.60" width="25.5" height="4.85" fill="#fdfeff"/>
<rect x="701.95" y="313.60" width="25.5" height="4.85" fill="#f4f9fe"/>
<rect x="728.52" y="313.60" width="17.6" height="4.85" fill="#f4f9fe"/>
<rect x="303.40" y="319.54" width="25.5" height="4.85" fill="#08478d"/>
<rect x="329.97" y="319.54" width="25.5" height="4.85" fill="#4292c6"/>
<rect x="356.54" y="319.54" width="25.5" height="4.85" fill="#9ecae1"/>
<rect x="383.11" y="319.54" width="25.5" height="4.85" fill="#c6dbef"/>
<rect x="409.68" y="319.54" width="25.5" height="4.85" fill="#ffffff"/>
<rect x="436.25" y="319.54" width="25.5" height="4.85" fill="#e3eef9"/>
<rect x="462.82" y="319.54" width="25.5" height="4.85" fill="#b2d2e8"/>
<rect x="489.39" y="319.54" width="25.5" height="4.85" fill="#aacfe5"/>
<rect x="515.96" y="319.54" width="25.5" height="4.85" fill="#70b1d7"/>
<rect x="542.53" y="319.54" width="25.5" height="4.85" fill="#8fc2de"/>
<rect x="569.10" y="319.54" width="25.5" height="4.85" fill="#aacfe5"/>
<rect x="595.67" y="319.54" width="25.5" height="4.85" fill="#aacfe5"/>
<rect x="622.24" y="319.54" width="25.5" height="4.85" fill="#aed1e7"/>
<rect x="648.81" y="319.54" width="25.5" height="4.85" fill="#c2d9ee"/>
<rect x="675.38" y="319.54" width="25.5" height="4.85" fill="#e3eef9"/>
<rect x="701.95" y="319.54" width="25.5" height="4.85" fill="#d4e5f4"/>
<rect x="728.52" y="319.54" width="17.6" height="4.85" fill="#d4e5f4"/>
<rect x="303.40" y="325.48" width="25.5" height="4.85" fill="#083a7a"/>
<rect x="329.97" y="325.48" width="25.5" height="4.85" fill="#1e6eb2"/>
<rect x="356.54" y="325.48" width="25.5" height="4.85" fill="#4a98c9"/>
<rect x="383.11" y="325.48" width="25.5" height="4.85" fill="#56a0ce"/>
<rect x="409.68" y="325.48" width="25.5" height="4.85" fill="#8abfdd"/>
<rect x="436.25" y="325.48" width="25.5" height="4.85" fill="#4e9acb"/>
<rect x="462.82" y="325.48" width="25.5" height="4.85" fill="#2878b8"/>
<rect x="489.39" y="325.48" width="25.5" height="4.85" fill="#2b7bba"/>
<rect x="515.96" y="325.48" width="25.5" height="4.85" fill="#1e6eb2"/>
<rect x="542.53" y="325.48" width="25.5" height="4.85" fill="#2878b8"/>
<rect x="569.10" y="325.48" width="25.5" height="4.85" fill="#2b7bba"/>
<rect x="595.67" y="325.48" width="25.5" height="4.85" fill="#3585bf"/>
<rect x="622.24" y="325.48" width="25.5" height="4.85" fill="#3585bf"/>
<rect x="648.81" y="325.48" width="25.5" height="4.85" fill="#3b8bc3"/>
<rect x="675.38" y="325.48" width="25.5" height="4.85" fill="#4e9acb"/>
<rect x="701.95" y="325.48" width="25.5" height="4.85" fill="#3888c1"/>
<rect x="728.52" y="325.48" width="17.6" height="4.85" fill="#4292c6"/>
<rect x="329.97" y="331.42" width="25.5" height="4.85" fill="#08306b"/>
<rect x="356.54" y="331.42" width="25.5" height="4.85" fill="#08306b"/>
<rect x="383.11" y="331.42" width="25.5" height="4.85" fill="#08306b"/>
<rect x="409.68" y="331.42" width="25.5" height="4.85" fill="#08306b"/>
<rect x="436.25" y="331.42" width="25.5" height="4.85" fill="#08306b"/>
<rect x="462.82" y="331.42" width="25.5" height="4.85" fill="#08306b"/>
<rect x="489.39" y="331.42" width="25.5" height="4.85" fill="#08306b"/>
<rect x="515.96" y="331.42" width="25.5" height="4.85" fill="#08306b"/>
<rect x="542.53" y="331.42" width="25.5" height="4.85" fill="#08306b"/>
<rect x="569.10" y="331.42" width="25.5" height="4.85" fill="#08306b"/>
<rect x="595.67" y="331.42" width="25.5" height="4.85" fill="#08306b"/>
<rect x="622.24" y="331.42" width="25.5" height="4.85" fill="#08306b"/>
<rect x="648.81" y="331.42" width="25.5" height="4.85" fill="#08306b"/>
<rect x="675.38" y="331.42" width="25.5" height="4.85" fill="#08306b"/>
<rect x="701.95" y="331.42" width="25.5" height="4.85" fill="#08306b"/>
<rect x="728.52" y="331.42" width="17.6" height="4.85" fill="#08306b"/>
<rect x="462.82" y="337.36" width="25.5" height="4.85" fill="#08306b"/>
<rect x="569.10" y="337.36" width="25.5" height="4.85" fill="#08306b"/>
<rect x="728.52" y="337.36" width="17.6" height="4.85" fill="#08306b"/>
<rect x="329.97" y="343.30" width="25.5" height="4.85" fill="#08306b"/>
<rect x="356.54" y="343.30" width="25.5" height="4.85" fill="#08306b"/>
<rect x="383.11" y="343.30" width="25.5" height="4.85" fill="#08306b"/>
<rect x="462.82" y="343.30" width="25.5" height="4.85" fill="#08306b"/>
<rect x="595.67" y="343.30" width="25.5" height="4.85" fill="#08306b"/>
<rect x="728.52" y="343.30" width="17.6" height="4.85" fill="#08306b"/>
<rect x="356.54" y="349.24" width="25.5" height="4.85" fill="#08306b"/>
<rect x="436.25" y="349.24" width="25.5" height="4.85" fill="#08306b"/>
<rect x="489.39" y="349.24" width="25.5" height="4.85" fill="#08306b"/>
<rect x="515.96" y="349.24" width="25.5" height="4.85" fill="#08306b"/>
<rect x="542.53" y="349.24" width="25.5" height="4.85" fill="#08306b"/>
<rect x="569.10" y="349.24" width="25.5" height="4.85" fill="#08306b"/>
<rect x="648.81" y="349.24" width="25.5" height="4.85" fill="#08306b"/>
<rect x="675.38" y="349.24" width="25.5" height="4.85" fill="#08306b"/>
<rect x="701.95" y="349.24" width="25.5" height="4.85" fill="#08306b"/>
<rect x="728.52" y="349.24" width="17.6" height="4.85" fill="#08306b"/>
<rect x="356.54" y="355.18" width="25.5" height="4.85" fill="#08306b"/>
<rect x="409.68" y="355.18" width="25.5" height="4.85" fill="#08306b"/>
<rect x="436.25" y="355.18" width="25.5" height="4.85" fill="#08306b"/>
<rect x="462.82" y="355.18" width="25.5" height="4.85" fill="#08306b"/>
<rect x="489.39" y="355.18" width="25.5" height="4.85" fill="#08306b"/>
<rect x="515.96" y="355.18" width="25.5" height="4.85" fill="#08306b"/>
<rect x="542.53" y="355.18" width="25.5" height="4.85" fill="#08306b"/>
<rect x="569.10" y="355.18" width="25.5" height="4.85" fill="#08306b"/>
<rect x="595.67" y="355.18" width="25.5" height="4.85" fill="#08306b"/>
<rect x="622.24" y="355.18" width="25.5" height="4.85" fill="#08306b"/>
<rect x="648.81" y="355.18" width="25.5" height="4.85" fill="#08306b"/>
<rect x="675.38" y="355.18" width="25.5" height="4.85" fill="#08306b"/>
<rect x="701.95" y="355.18" width="25.5" height="4.85" fill="#08306b"/>
<rect x="728.52" y="355.18" width="17.6" height="4.85" fill="#08306b"/>
<rect x="329.97" y="361.12" width="25.5" height="4.85" fill="#08306b"/>
<rect x="356.54" y="361.12" width="25.5" height="4.85" fill="#08306b"/>
<rect x="383.11" y="361.12" width="25.5" height="4.85" fill="#08306b"/>
<rect x="409.68" y="361.12" width="25.5" height="4.85" fill="#08306b"/>
<rect x="436.25" y="361.12" width="25.5" height="4.85" fill="#08306b"/>
<rect x="462.82" y="361.12" width="25.5" height="4.85" fill="#08306b"/>
<rect x="489.39" y="361.12" width="25.5" height="4.85" fill="#08306b"/>
<rect x="515.96" y="361.12" width="25.5" height="4.85" fill="#08306b"/>
<rect x="542.53" y="361.12" width="25.5" height="4.85" fill="#08306b"/>
<rect x="569.10" y="361.12" width="25.5" height="4.85" fill="#08306b"/>
<rect x="595.67" y="361.12" width="25.5" height="4.85" fill="#08306b"/>
<rect x="622.24" y="361.12" width="25.5" height="4.85" fill="#08306b"/>
<rect x="648.81" y="361.12" width="25.5" height="4.85" fill="#08306b"/>
<rect x="675.38" y="361.12" width="25.5" height="4.85" fill="#08306b"/>
<rect x="701.95" y="361.12" width="25.5" height="4.85" fill="#08306b"/>
<rect x="728.52" y="361.12" width="17.6" height="4.85" fill="#08306b"/>
<rect x="329.97" y="367.06" width="25.5" height="4.85" fill="#08306b"/>
<rect x="356.54" y="367.06" width="25.5" height="4.85" fill="#08306b"/>
<rect x="383.11" y="367.06" width="25.5" height="4.85" fill="#08306b"/>
<rect x="409.68" y="367.06" width="25.5" height="4.85" fill="#08306b"/>
<rect x="436.25" y="367.06" width="25.5" height="4.85" fill="#08306b"/>
<rect x="462.82" y="367.06" width="25.5" height="4.85" fill="#08306b"/>
<rect x="489.39" y="367.06" width="25.5" height="4.85" fill="#08306b"/>
<rect x="515.96" y="367.06" width="25.5" height="4.85" fill="#08306b"/>
<rect x="542.53" y="367.06" width="25.5" height="4.85" fill="#08306b"/>
<rect x="569.10" y="367.06" width="25.5" height="4.85" fill="#08306b"/>
<rect x="595.67" y="367.06" width="25.5" height="4.85" fill="#08306b"/>
<rect x="622.24" y="367.06" width="25.5" height="4.85" fill="#08306b"/>
<rect x="648.81" y="367.06" width="25.5" height="4.85" fill="#08306b"/>
<rect x="675.38" y="367.06" width="25.5" height="4.85" fill="#08306b"/>
<rect x="701.95" y="367.06" width="25.5" height="4.85" fill="#08306b"/>
<rect x="728.52" y="367.06" width="17.6" height="4.85" fill="#08306b"/>
<rect x="436.25" y="373.00" width="25.5" height="4.85" fill="#08306b"/>
<rect x="462.82" y="373.00" width="25.5" height="4.85" fill="#08306b"/>
<rect x="489.39" y="373.00" width="25.5" height="4.85" fill="#08306b"/>
<rect x="515.96" y="373.00" width="25.5" height="4.85" fill="#08306b"/>
<rect x="542.53" y="373.00" width="25.5" height="4.85" fill="#08306b"/>
<rect x="569.10" y="373.00" width="25.5" height="4.85" fill="#08306b"/>
<rect x="595.67" y="373.00" width="25.5" height="4.85" fill="#08306b"/>
<rect x="622.24" y="373.00" width="25.5" height="4.85" fill="#08306b"/>
<rect x="648.81" y="373.00" width="25.5" height="4.85" fill="#08306b"/>
<rect x="675.38" y="373.00" width="25.5" height="4.85" fill="#08306b"/>
<rect x="701.95" y="373.00" width="25.5" height="4.85" fill="#08306b"/>
<rect x="728.52" y="373.00" width="17.6" height="4.85" fill="#08306b"/>
<rect x="622.24" y="378.94" width="25.5" height="4.85" fill="#08306b"/>
<rect x="728.52" y="378.94" width="17.6" height="4.85" fill="#08306b"/>
</g>
<rect x="295" y="259.5" width="104.5" height="47" fill="rgba(255,152,48,0.15)" stroke="#d0822e" stroke-width="1.700" shape-rendering="auto"/>
<rect x="295" y="384" width="104" height="5" fill="#ff9830"/>
</svg>
<div class="t" style="left:65.95px;top:257.12px;font-size:12.5px;color:#ccccdc;-webkit-text-stroke:0.3px;">2.15 s</div>
<div class="t" style="left:59.01px;top:268.86px;font-size:12.5px;color:#ccccdc;-webkit-text-stroke:0.3px;">537 ms</div>
<div class="t" style="left:59.01px;top:280.58px;font-size:12.5px;color:#ccccdc;-webkit-text-stroke:0.3px;">134 ms</div>
<div class="t" style="left:55.54px;top:292.31px;font-size:12.5px;color:#ccccdc;-webkit-text-stroke:0.3px;">33.6 ms</div>
<div class="t" style="left:55.54px;top:304.05px;font-size:12.5px;color:#ccccdc;-webkit-text-stroke:0.3px;">8.39 ms</div>
<div class="t" style="left:55.54px;top:315.77px;font-size:12.5px;color:#ccccdc;-webkit-text-stroke:0.3px;">2.10 ms</div>
<div class="t" style="left:62.22px;top:327.50px;font-size:12.5px;color:#ccccdc;-webkit-text-stroke:0.3px;">524 &micro;s</div>
<div class="t" style="left:62.22px;top:339.24px;font-size:12.5px;color:#ccccdc;-webkit-text-stroke:0.3px;">131 &micro;s</div>
<div class="t" style="left:58.75px;top:350.97px;font-size:12.5px;color:#ccccdc;-webkit-text-stroke:0.3px;">32.8 &micro;s</div>
<div class="t" style="left:58.75px;top:362.69px;font-size:12.5px;color:#ccccdc;-webkit-text-stroke:0.3px;">8.19 &micro;s</div>
<div class="t" style="left:58.75px;top:374.43px;font-size:12.5px;color:#ccccdc;-webkit-text-stroke:0.3px;">2.05 &micro;s</div>
<div class="t" style="left:126.55px;top:392.62px;font-size:12.5px;color:#ccccdc;-webkit-text-stroke:0.3px;letter-spacing:0.055px;">14:45</div>
<div class="t" style="left:179.55px;top:392.62px;font-size:12.5px;color:#ccccdc;-webkit-text-stroke:0.3px;letter-spacing:0.055px;">14:50</div>
<div class="t" style="left:232.55px;top:392.62px;font-size:12.5px;color:#ccccdc;-webkit-text-stroke:0.3px;letter-spacing:0.055px;">14:55</div>
<div class="t" style="left:286.55px;top:392.62px;font-size:12.5px;color:#ccccdc;-webkit-text-stroke:0.3px;letter-spacing:0.055px;">15:00</div>
<div class="t" style="left:339.55px;top:392.62px;font-size:12.5px;color:#ccccdc;-webkit-text-stroke:0.3px;letter-spacing:0.055px;">15:05</div>
<div class="t" style="left:392.55px;top:392.62px;font-size:12.5px;color:#ccccdc;-webkit-text-stroke:0.3px;letter-spacing:0.055px;">15:10</div>
<div class="t" style="left:445.55px;top:392.62px;font-size:12.5px;color:#ccccdc;-webkit-text-stroke:0.3px;letter-spacing:0.055px;">15:15</div>
<div class="t" style="left:498.55px;top:392.62px;font-size:12.5px;color:#ccccdc;-webkit-text-stroke:0.3px;letter-spacing:0.055px;">15:20</div>
<div class="t" style="left:551.55px;top:392.62px;font-size:12.5px;color:#ccccdc;-webkit-text-stroke:0.3px;letter-spacing:0.055px;">15:25</div>
<div class="t" style="left:604.55px;top:392.62px;font-size:12.5px;color:#ccccdc;-webkit-text-stroke:0.3px;letter-spacing:0.055px;">15:30</div>
<div class="t" style="left:657.55px;top:392.62px;font-size:12.5px;color:#ccccdc;-webkit-text-stroke:0.3px;letter-spacing:0.055px;">15:35</div>
<div class="t" style="left:710.55px;top:392.62px;font-size:12.5px;color:#ccccdc;-webkit-text-stroke:0.3px;letter-spacing:0.055px;">15:40</div>
<div class="t" style="left:32px;top:319px;font-size:12.500px;color:#ccccdc;transform:translate(-50%,-50%) rotate(-90deg);letter-spacing:0.3px">duration</div>
<div class="panel" style="left:773px;top:175px;width:491px;height:116px"></div>
<div class="panel" style="left:773px;top:299px;width:491px;height:116px"></div>
<div class="abs" style="left:781px;top:182px;width:16px;height:16px;border-radius:50%;background:#111217;border:1px solid #34363d"></div>
<div class="t" style="left:790px;top:231px;font-size:12.500px;color:#ccccdc;transform:translate(-50%,-50%) rotate(-90deg);letter-spacing:0.3px">span/s</div>
<svg style="left:0;top:0" width="1295" height="894" viewBox="0 0 1295 894">
<g shape-rendering="crispEdges">
<rect x="850" y="205" width="397" height="1" fill="#2b2d33"/>
<rect x="850" y="223" width="397" height="1" fill="#2b2d33"/>
<rect x="850" y="242" width="397" height="1" fill="#2b2d33"/>
<rect x="850" y="260" width="397" height="1" fill="#2b2d33"/>
<rect x="905" y="202" width="1" height="63" fill="#2b2d33"/>
<rect x="971" y="202" width="1" height="63" fill="#2b2d33"/>
<rect x="1037" y="202" width="1" height="63" fill="#2b2d33"/>
<rect x="1103" y="202" width="1" height="63" fill="#2b2d33"/>
<rect x="1169" y="202" width="1" height="63" fill="#2b2d33"/>
<rect x="1235" y="202" width="1" height="63" fill="#2b2d33"/>
</g>
<rect x="983.54" y="257.13" width="3.5" height="3.17" fill="#58964f"/>
<rect x="989.74" y="255.52" width="3.5" height="4.78" fill="#58964f"/>
<rect x="995.72" y="254.37" width="3.5" height="5.93" fill="#58964f"/>
<rect x="1001.93" y="252.07" width="3.5" height="8.23" fill="#58964f"/>
<rect x="1008.36" y="250.23" width="3.5" height="10.07" fill="#58964f"/>
<rect x="1014.11" y="249.08" width="3.5" height="11.22" fill="#58964f"/>
<rect x="1019.86" y="247.47" width="3.5" height="12.83" fill="#58964f"/>
<rect x="1026.30" y="244.71" width="3.5" height="15.59" fill="#58964f"/>
<rect x="1032.27" y="243.33" width="3.5" height="16.97" fill="#58964f"/>
<rect x="1038.48" y="241.03" width="3.5" height="19.27" fill="#58964f"/>
<rect x="1044.69" y="232.53" width="3.5" height="27.77" fill="#58964f"/>
<rect x="1050.89" y="224.02" width="3.5" height="36.28" fill="#58964f"/>
<rect x="1057.10" y="218.74" width="3.5" height="41.56" fill="#58964f"/>
<rect x="1063.31" y="212.99" width="3.5" height="47.31" fill="#58964f"/>
<rect x="1069.74" y="211.84" width="3.5" height="48.46" fill="#58964f"/>
<rect x="1075.95" y="210.69" width="3.5" height="49.61" fill="#58964f"/>
<rect x="1081.93" y="207.93" width="3.5" height="52.37" fill="#58964f"/>
<rect x="1088.14" y="207.24" width="3.5" height="53.06" fill="#58964f"/>
<rect x="1094.34" y="207.93" width="3.5" height="52.37" fill="#58964f"/>
<rect x="1100.32" y="212.99" width="3.5" height="47.31" fill="#58964f"/>
<rect x="1106.53" y="212.99" width="3.5" height="47.31" fill="#58964f"/>
<rect x="1112.73" y="212.30" width="3.5" height="48.00" fill="#58964f"/>
<rect x="1118.71" y="212.30" width="3.5" height="48.00" fill="#58964f"/>
<rect x="1124.23" y="212.99" width="3.5" height="47.31" fill="#58964f"/>
<rect x="1130.66" y="210.23" width="3.5" height="50.07" fill="#58964f"/>
<rect x="1136.87" y="208.39" width="3.5" height="51.91" fill="#58964f"/>
<rect x="1142.85" y="208.39" width="3.5" height="51.91" fill="#58964f"/>
<rect x="1149.05" y="208.85" width="3.5" height="51.45" fill="#58964f"/>
<rect x="1155.26" y="209.54" width="3.5" height="50.76" fill="#58964f"/>
<rect x="1161.24" y="210.69" width="3.5" height="49.61" fill="#58964f"/>
<rect x="1167.45" y="208.39" width="3.5" height="51.91" fill="#58964f"/>
<rect x="1173.65" y="211.15" width="3.5" height="49.15" fill="#58964f"/>
<rect x="1179.63" y="212.30" width="3.5" height="48.00" fill="#58964f"/>
<rect x="1185.84" y="211.84" width="3.5" height="48.46" fill="#58964f"/>
<rect x="1192.04" y="211.15" width="3.5" height="49.15" fill="#58964f"/>
<rect x="1198.02" y="212.99" width="3.5" height="47.31" fill="#58964f"/>
<rect x="1204.23" y="215.75" width="3.5" height="44.55" fill="#58964f"/>
<rect x="1210.43" y="214.83" width="3.5" height="45.47" fill="#58964f"/>
<rect x="1216.87" y="212.99" width="3.5" height="47.31" fill="#58964f"/>
<rect x="1223.08" y="215.98" width="3.5" height="44.32" fill="#58964f"/>
<rect x="1229.51" y="216.44" width="3.5" height="43.86" fill="#58964f"/>
<rect x="1235.95" y="216.44" width="3.5" height="43.86" fill="#58964f"/>
<rect x="1242.16" y="215.98" width="3.5" height="44.32" fill="#58964f"/>
<path d="M980.23 256.91l3.2 3.2-3.2 3.2-3.2-3.2z" fill="#62a85a"/>
<path d="M991.49 253.47l3.2 3.2-3.2 3.2-3.2-3.2z" fill="#62a85a"/>
<path d="M996.78 253.01l3.2 3.2-3.2 3.2-3.2-3.2z" fill="#62a85a"/>
<path d="M1010.57 248.41l3.2 3.2-3.2 3.2-3.2-3.2z" fill="#62a85a"/>
<path d="M1015.86 247.03l3.2 3.2-3.2 3.2-3.2-3.2z" fill="#62a85a"/>
<path d="M1020.23 246.11l3.2 3.2-3.2 3.2-3.2-3.2z" fill="#62a85a"/>
<path d="M1028.05 242.66l3.2 3.2-3.2 3.2-3.2-3.2z" fill="#62a85a"/>
<path d="M1033.56 242.66l3.2 3.2-3.2 3.2-3.2-3.2z" fill="#62a85a"/>
<path d="M1040.92 232.09l3.2 3.2-3.2 3.2-3.2-3.2z" fill="#62a85a"/>
<path d="M1046.44 223.58l3.2 3.2-3.2 3.2-3.2-3.2z" fill="#62a85a"/>
<path d="M1046.44 232.09l3.2 3.2-3.2 3.2-3.2-3.2z" fill="#62a85a"/>
<path d="M1058.39 217.83l3.2 3.2-3.2 3.2-3.2-3.2z" fill="#62a85a"/>
<path d="M1064.60 211.63l3.2 3.2-3.2 3.2-3.2-3.2z" fill="#62a85a"/>
<path d="M1071.49 211.63l3.2 3.2-3.2 3.2-3.2-3.2z" fill="#62a85a"/>
<path d="M1077.93 208.64l3.2 3.2-3.2 3.2-3.2-3.2z" fill="#62a85a"/>
<path d="M1083.68 207.03l3.2 3.2-3.2 3.2-3.2-3.2z" fill="#62a85a"/>
<path d="M1089.89 207.03l3.2 3.2-3.2 3.2-3.2-3.2z" fill="#62a85a"/>
<path d="M1099.08 210.94l3.2 3.2-3.2 3.2-3.2-3.2z" fill="#62a85a"/>
<path d="M1108.74 211.63l3.2 3.2-3.2 3.2-3.2-3.2z" fill="#62a85a"/>
<path d="M1123.68 212.78l3.2 3.2-3.2 3.2-3.2-3.2z" fill="#62a85a"/>
<path d="M1131.26 209.10l3.2 3.2-3.2 3.2-3.2-3.2z" fill="#62a85a"/>
<path d="M1137.01 207.95l3.2 3.2-3.2 3.2-3.2-3.2z" fill="#62a85a"/>
<path d="M1150.34 208.64l3.2 3.2-3.2 3.2-3.2-3.2z" fill="#62a85a"/>
<path d="M1157.01 209.33l3.2 3.2-3.2 3.2-3.2-3.2z" fill="#62a85a"/>
<path d="M1162.30 209.79l3.2 3.2-3.2 3.2-3.2-3.2z" fill="#62a85a"/>
<path d="M1174.94 210.48l3.2 3.2-3.2 3.2-3.2-3.2z" fill="#62a85a"/>
<path d="M1182.53 211.63l3.2 3.2-3.2 3.2-3.2-3.2z" fill="#62a85a"/>
<path d="M1187.59 210.48l3.2 3.2-3.2 3.2-3.2-3.2z" fill="#62a85a"/>
<path d="M1194.48 211.63l3.2 3.2-3.2 3.2-3.2-3.2z" fill="#62a85a"/>
<path d="M1199.08 212.09l3.2 3.2-3.2 3.2-3.2-3.2z" fill="#62a85a"/>
<path d="M1204.37 216.23l3.2 3.2-3.2 3.2-3.2-3.2z" fill="#62a85a"/>
<path d="M1212.18 213.93l3.2 3.2-3.2 3.2-3.2-3.2z" fill="#62a85a"/>
<path d="M1223.91 215.54l3.2 3.2-3.2 3.2-3.2-3.2z" fill="#62a85a"/>
<path d="M1230.80 216.23l3.2 3.2-3.2 3.2-3.2-3.2z" fill="#62a85a"/>
<path d="M1237.70 216.00l3.2 3.2-3.2 3.2-3.2-3.2z" fill="#62a85a"/>
<path d="M1244.37 214.85l3.2 3.2-3.2 3.2-3.2-3.2z" fill="#62a85a"/>
<g shape-rendering="crispEdges">
<rect x="839" y="339" width="408" height="1" fill="#2b2d33"/>
<rect x="839" y="361" width="408" height="1" fill="#2b2d33"/>
<rect x="839" y="384" width="408" height="1" fill="#2b2d33"/>
<rect x="895" y="325" width="1" height="64" fill="#2b2d33"/>
<rect x="963" y="325" width="1" height="64" fill="#2b2d33"/>
<rect x="1031" y="325" width="1" height="64" fill="#2b2d33"/>
<rect x="1098" y="325" width="1" height="64" fill="#2b2d33"/>
<rect x="1166" y="325" width="1" height="64" fill="#2b2d33"/>
<rect x="1234" y="325" width="1" height="64" fill="#2b2d33"/>
</g>
<rect x="1095.79" y="373.54" width="3.600" height="10.76" fill="#bd3048"/>
<rect x="1101.53" y="372.78" width="3.600" height="11.52" fill="#bd3048"/>
<rect x="1108.05" y="380.06" width="3.600" height="4.24" fill="#bd3048"/>
<rect x="1132.95" y="335.23" width="3.600" height="49.07" fill="#bd3048"/>
<rect x="1139.85" y="358.22" width="3.600" height="26.08" fill="#bd3048"/>
<rect x="1165.13" y="331.40" width="3.600" height="52.90" fill="#bd3048"/>
<rect x="1170.50" y="376.23" width="3.600" height="8.07" fill="#bd3048"/>
<rect x="1227.97" y="369.71" width="3.600" height="14.59" fill="#bd3048"/>
<path d="M1091.07 372.76l2.700 2.700-2.700 2.700-2.700-2.700z" fill="#bd3048"/>
<path d="M1104.48 381.19l2.700 2.700-2.700 2.700-2.700-2.700z" fill="#bd3048"/>
<path d="M1130.92 335.60l2.700 2.700-2.700 2.700-2.700-2.700z" fill="#bd3048"/>
<path d="M1164.64 331.38l2.700 2.700-2.700 2.700-2.700-2.700z" fill="#bd3048"/>
<path d="M1169.62 377.36l2.700 2.700-2.700 2.700-2.700-2.700z" fill="#bd3048"/>
<path d="M1225.94 370.84l2.700 2.700-2.700 2.700-2.700-2.700z" fill="#bd3048"/>
</svg>
<div class="t" style="left:816.58px;top:198.57px;font-size:13px;color:#ccccdc;-webkit-text-stroke:0.3px;">3000</div>
<div class="t" style="left:816.58px;top:216.77px;font-size:13px;color:#ccccdc;-webkit-text-stroke:0.3px;">2000</div>
<div class="t" style="left:816.58px;top:235.17px;font-size:13px;color:#ccccdc;-webkit-text-stroke:0.3px;">1000</div>
<div class="t" style="left:838.27px;top:253.37px;font-size:13px;color:#ccccdc;-webkit-text-stroke:0.3px;">0</div>
<div class="t" style="left:888.45px;top:268.82px;font-size:12.5px;color:#ccccdc;-webkit-text-stroke:0.3px;letter-spacing:0.055px;">14:50</div>
<div class="t" style="left:954.55px;top:268.82px;font-size:12.5px;color:#ccccdc;-webkit-text-stroke:0.3px;letter-spacing:0.055px;">15:00</div>
<div class="t" style="left:1020.65px;top:268.82px;font-size:12.5px;color:#ccccdc;-webkit-text-stroke:0.3px;letter-spacing:0.055px;">15:10</div>
<div class="t" style="left:1086.75px;top:268.82px;font-size:12.5px;color:#ccccdc;-webkit-text-stroke:0.3px;letter-spacing:0.055px;">15:20</div>
<div class="t" style="left:1152.85px;top:268.82px;font-size:12.5px;color:#ccccdc;-webkit-text-stroke:0.3px;letter-spacing:0.055px;">15:30</div>
<div class="t" style="left:1218.95px;top:268.82px;font-size:12.5px;color:#ccccdc;-webkit-text-stroke:0.3px;letter-spacing:0.055px;">15:40</div>
<div class="abs" style="left:781px;top:305.500px;width:16px;height:16px;border-radius:50%;background:#111217;border:1px solid #34363d"></div>
<div class="t" style="left:790px;top:354.500px;font-size:12.500px;color:#ccccdc;transform:translate(-50%,-50%) rotate(-90deg);letter-spacing:0.3px">error/s</div>
<div class="t" style="left:816.12px;top:332.62px;font-size:12.5px;color:#ccccdc;-webkit-text-stroke:0.3px;">0.4</div>
<div class="t" style="left:816.12px;top:354.93px;font-size:12.5px;color:#ccccdc;-webkit-text-stroke:0.3px;">0.2</div>
<div class="t" style="left:826.55px;top:377.62px;font-size:12.5px;color:#ccccdc;-webkit-text-stroke:0.3px;">0</div>
<div class="t" style="left:879.05px;top:393.02px;font-size:12.5px;color:#ccccdc;-webkit-text-stroke:0.3px;letter-spacing:0.055px;">14:50</div>
<div class="t" style="left:946.80px;top:393.02px;font-size:12.5px;color:#ccccdc;-webkit-text-stroke:0.3px;letter-spacing:0.055px;">15:00</div>
<div class="t" style="left:1014.55px;top:393.02px;font-size:12.5px;color:#ccccdc;-webkit-text-stroke:0.3px;letter-spacing:0.055px;">15:10</div>
<div class="t" style="left:1082.30px;top:393.02px;font-size:12.5px;color:#ccccdc;-webkit-text-stroke:0.3px;letter-spacing:0.055px;">15:20</div>
<div class="t" style="left:1150.05px;top:393.02px;font-size:12.5px;color:#ccccdc;-webkit-text-stroke:0.3px;letter-spacing:0.055px;">15:30</div>
<div class="t" style="left:1217.80px;top:393.02px;font-size:12.5px;color:#ccccdc;-webkit-text-stroke:0.3px;letter-spacing:0.055px;">15:40</div>
<div class="abs" style="left:16px;top:461px;width:1248px;height:1px;background:#26282e"></div>
<div class="abs" style="left:284px;top:459px;width:114px;height:2.500px;border-radius:2px;background:linear-gradient(90deg,#f55f3e,#ff8833)"></div>
<div class="t" style="left:32.00px;top:435.31px;font-size:14.5px;color:#9d9eab;-webkit-text-stroke:0.3px;letter-spacing:0.307px;">Breakdown</div>
<div class="t" style="left:139.50px;top:435.31px;font-size:14.5px;color:#9d9eab;-webkit-text-stroke:0.3px;letter-spacing:0.246px;">Root cause latency</div>
<div class="t" style="left:300.00px;top:435.31px;font-size:14.5px;color:#d6d6e4;-webkit-text-stroke:0.3px;letter-spacing:0.314px;">Comparison</div>
<div class="t" style="left:414.00px;top:435.31px;font-size:14.5px;color:#9d9eab;-webkit-text-stroke:0.3px;letter-spacing:0.306px;">Slow traces</div>
<div class="btn" style="left:1229px;top:428px;width:35px;height:32px"></div>
<svg style="left:1238px;top:436px" width="16" height="16" viewBox="0 0 16 16" fill="none" stroke="#ccccdc" stroke-width="1.300"><circle cx="12" cy="3.500" r="2.100"/><circle cx="3.800" cy="8" r="2.100"/><circle cx="12" cy="12.500" r="2.100"/><path d="M5.700 7L10.100 4.500M5.700 9l4.400 2.500"/></svg>
<div class="t" style="left:16.00px;top:482.41px;font-size:14.5px;color:#ccccdc;-webkit-text-stroke:0.3px;letter-spacing:0.362px;">Attributes are ordered by the difference between the baseline and selection values for each value.</div>
<div class="abs" style="left:695px;top:488px;width:15px;height:4px;border-radius:2px;background:#4a7cc9"></div>
<div class="t" style="left:718.00px;top:482.41px;font-size:14.5px;color:#ccccdc;-webkit-text-stroke:0.3px;letter-spacing:0.197px;">Baseline</div>
<div class="abs" style="left:792px;top:488px;width:15px;height:4px;border-radius:2px;background:#ff9830"></div>
<div class="t" style="left:815.60px;top:482.41px;font-size:14.5px;color:#ccccdc;-webkit-text-stroke:0.3px;letter-spacing:0.294px;">Selection</div>
<div class="panel" style="left:16px;top:516px;width:300px;height:352px;border-radius:5px"></div>
<div class="t" style="left:25.00px;top:528.17px;font-size:18.5px;color:#ccccdc;letter-spacing:-0.416px;-webkit-text-stroke:0.4px;">Attributes</div>
<div class="abs" style="left:25px;top:550px;width:282px;height:1px;background:#2e3036"></div>
<div class="t" style="left:25.00px;top:568.62px;font-size:12.5px;color:#ccccdc;-webkit-text-stroke:0.55px;letter-spacing:0.351px;">Selected: All</div>
<div class="box" style="left:25px;top:599px;width:282px;height:32px"></div>
<svg style="left:33.3px;top:607.7px" width="16" height="16" viewBox="-8 -8 16 16"><circle cx="-0.7" cy="-0.7" r="5.7" fill="none" stroke="#9d9eab" stroke-width="1.25"/><path d="M3.3298999999999994 3.3298999999999994L6.4 6.4" stroke="#9d9eab" stroke-width="1.25" stroke-linecap="round"/></svg>
<div class="t" style="left:54.20px;top:607.81px;font-size:14.5px;color:#9d9eab;-webkit-text-stroke:0.3px;letter-spacing:0.163px;">Search attributes...</div>
<div class="t" style="left:41.00px;top:649.17px;font-size:13px;color:#ccccdc;-webkit-text-stroke:0.3px;letter-spacing:-0.107px;">Favorites</div>
<div class="t" style="left:126.00px;top:649.17px;font-size:13px;color:#9d9eab;-webkit-text-stroke:0.3px;letter-spacing:0.177px;">All</div>
<div class="t" style="left:172.30px;top:649.17px;font-size:13px;color:#9d9eab;-webkit-text-stroke:0.3px;letter-spacing:-0.205px;">Resource</div>
<div class="t" style="left:258.80px;top:649.17px;font-size:13px;color:#9d9eab;-webkit-text-stroke:0.3px;letter-spacing:-0.453px;">Span</div>
<div class="abs" style="left:25px;top:674px;width:282px;height:1px;background:#26282e"></div>
<div class="abs" style="left:25px;top:671.500px;width:85px;height:2.500px;border-radius:2px;background:linear-gradient(90deg,#f55f3e,#ff8833)"></div>
<div class="abs" style="left:26px;top:688px;width:64.7px;height:22px;border-radius:5px;background:#292b30;border:1px solid #3b3d43"></div>
<div class="t" style="left:31.00px;top:692.37px;font-size:13px;color:#ccccdc;-webkit-text-stroke:0.3px;letter-spacing:0.064px;">resource.</div>
<div class="t" style="left:99.40px;top:691.62px;font-size:12.5px;color:#ccccdc;-webkit-text-stroke:0.55px;letter-spacing:0.388px;">service.name</div>
<svg style="left:273.600px;top:692.8px" width="12.800" height="12.800" viewBox="0 0 14 14"><path d="M7 .8l1.900 4 4.300.6-3.100 3 .75 4.300L7 10.600l-3.850 2.100.75-4.300-3.100-3 4.300-.6z" fill="#ccccdc" stroke="#ccccdc" stroke-width="0.9" stroke-linejoin="round"/></svg>
<div class="abs" style="left:26px;top:724px;width:41.5px;height:22px;border-radius:5px;background:#292b30;border:1px solid #3b3d43"></div>
<div class="t" style="left:31.00px;top:728.37px;font-size:13px;color:#ccccdc;-webkit-text-stroke:0.3px;letter-spacing:-0.075px;">span.</div>
<div class="t" style="left:75.80px;top:727.62px;font-size:12.5px;color:#ccccdc;-webkit-text-stroke:0.55px;letter-spacing:0.311px;">name</div>
<svg style="left:273.600px;top:728.8px" width="12.800" height="12.800" viewBox="0 0 14 14"><path d="M7 .8l1.900 4 4.300.6-3.100 3 .75 4.300L7 10.600l-3.850 2.100.75-4.300-3.100-3 4.300-.6z" fill="#ccccdc" stroke="#ccccdc" stroke-width="0.9" stroke-linejoin="round"/></svg>
<div class="abs" style="left:26px;top:760px;width:41.5px;height:22px;border-radius:5px;background:#292b30;border:1px solid #3b3d43"></div>
<div class="t" style="left:31.00px;top:764.37px;font-size:13px;color:#ccccdc;-webkit-text-stroke:0.3px;letter-spacing:-0.075px;">span.</div>
<div class="t" style="left:75.80px;top:763.62px;font-size:12.5px;color:#ccccdc;-webkit-text-stroke:0.55px;letter-spacing:0.590px;">kind</div>
<svg style="left:273.600px;top:764.8px" width="12.800" height="12.800" viewBox="0 0 14 14"><path d="M7 .8l1.900 4 4.300.6-3.100 3 .75 4.300L7 10.600l-3.850 2.100.75-4.300-3.100-3 4.300-.6z" fill="#ccccdc" stroke="#ccccdc" stroke-width="0.9" stroke-linejoin="round"/></svg>
<div class="abs" style="left:26px;top:796px;width:41.5px;height:22px;border-radius:5px;background:#292b30;border:1px solid #3b3d43"></div>
<div class="t" style="left:31.00px;top:800.37px;font-size:13px;color:#ccccdc;-webkit-text-stroke:0.3px;letter-spacing:-0.075px;">span.</div>
<div class="t" style="left:75.80px;top:799.62px;font-size:12.5px;color:#ccccdc;-webkit-text-stroke:0.55px;letter-spacing:0.374px;">rootName</div>
<svg style="left:273.600px;top:800.8px" width="12.800" height="12.800" viewBox="0 0 14 14"><path d="M7 .8l1.900 4 4.300.6-3.100 3 .75 4.300L7 10.600l-3.850 2.100.75-4.300-3.100-3 4.300-.6z" fill="#ccccdc" stroke="#ccccdc" stroke-width="0.9" stroke-linejoin="round"/></svg>
<div class="abs" style="left:26px;top:832px;width:41.5px;height:22px;border-radius:5px;background:#292b30;border:1px solid #3b3d43"></div>
<div class="t" style="left:31.00px;top:836.37px;font-size:13px;color:#ccccdc;-webkit-text-stroke:0.3px;letter-spacing:-0.075px;">span.</div>
<div class="t" style="left:75.80px;top:835.62px;font-size:12.5px;color:#ccccdc;-webkit-text-stroke:0.55px;letter-spacing:0.403px;">rootServiceName</div>
<svg style="left:273.600px;top:836.8px" width="12.800" height="12.800" viewBox="0 0 14 14"><path d="M7 .8l1.900 4 4.300.6-3.100 3 .75 4.300L7 10.600l-3.850 2.100.75-4.300-3.100-3 4.300-.6z" fill="#ccccdc" stroke="#ccccdc" stroke-width="0.9" stroke-linejoin="round"/></svg>
<div class="abs" style="left:300px;top:683px;width:15px;height:183px;background:#2c2c2c;border-left:1px solid #333"></div>
<div class="abs" style="left:304.300px;top:686px;width:7.500px;height:113px;border-radius:4px;background:#6b6b6b"></div>
<div class="box" style="left:332px;top:516px;width:932px;height:32px"></div>
<svg style="left:340px;top:524px" width="16" height="16" viewBox="-8 -8 16 16"><circle cx="-0.7" cy="-0.7" r="5.7" fill="none" stroke="#9d9eab" stroke-width="1.25"/><path d="M3.3298999999999994 3.3298999999999994L6.4 6.4" stroke="#9d9eab" stroke-width="1.25" stroke-linecap="round"/></svg>
<div class="t" style="left:361.00px;top:524.61px;font-size:14.5px;color:#9d9eab;-webkit-text-stroke:0.3px;letter-spacing:0.012px;">Search</div>
<div class="panel" style="left:332px;top:556px;width:462px;height:304px;border-radius:6px 6px 0 0"></div>
<div class="abs" style="left:332px;top:742.500px;width:462px;height:2px;background:#292b31"></div>
<div class="t" style="left:341.70px;top:565.61px;font-size:14.5px;color:#ccccdc;-webkit-text-stroke:0.55px;letter-spacing:0.517px;">span.http.method</div>
<div class="btn" style="left:726.3px;top:561.500px;width:58.500px;height:23.500px;border-radius:5px;background:#2a2d32;border-color:#2f3137"></div>
<div class="t" style="left:733.60px;top:566.62px;font-size:12.5px;color:#ccccdc;-webkit-text-stroke:0.55px;letter-spacing:0.566px;">Inspect</div>
<svg style="left:0;top:0" width="1295" height="894" viewBox="0 0 1295 894" shape-rendering="crispEdges">
<rect x="378.3" y="605" width="407" height="1" fill="#2b2d33"/>
<rect x="378.3" y="629" width="407" height="1" fill="#2b2d33"/>
<rect x="378.3" y="654" width="407" height="1" fill="#2b2d33"/>
<rect x="378.3" y="678" width="407" height="1" fill="#2b2d33"/>
<rect x="378.3" y="703" width="407" height="1" fill="#2b2d33"/>
<rect x="378.3" y="727" width="407" height="1" fill="#2b2d33"/>
<rect x="383.2" y="626.8" width="45.5" height="100.5" fill="#4a7cc9" shape-rendering="auto"/>
<rect x="431.8" y="686.5" width="44.5" height="40.8" fill="#d5812f" stroke="#ff9830" stroke-width="1" shape-rendering="auto"/>
<rect x="537.2" y="705.0" width="45.5" height="22.3" fill="#4a7cc9" shape-rendering="auto"/>
<rect x="585.8" y="646.5" width="44.5" height="80.8" fill="#d5812f" stroke="#ff9830" stroke-width="1" shape-rendering="auto"/>
</svg>
<div class="t" style="left:340.03px;top:598.52px;font-size:12.5px;color:#ccccdc;-webkit-text-stroke:0.3px;">100%</div>
<div class="t" style="left:346.98px;top:623.02px;font-size:12.5px;color:#ccccdc;-webkit-text-stroke:0.3px;">80%</div>
<div class="t" style="left:346.98px;top:647.52px;font-size:12.5px;color:#ccccdc;-webkit-text-stroke:0.3px;">60%</div>
<div class="t" style="left:346.98px;top:672.02px;font-size:12.5px;color:#ccccdc;-webkit-text-stroke:0.3px;">40%</div>
<div class="t" style="left:346.98px;top:696.52px;font-size:12.5px;color:#ccccdc;-webkit-text-stroke:0.3px;">20%</div>
<div class="t" style="left:353.93px;top:721.02px;font-size:12.5px;color:#ccccdc;-webkit-text-stroke:0.3px;">0%</div>
<div class="t" style="left:392.25px;top:613.55px;font-size:9.5px;color:#ccccdc;-webkit-text-stroke:0.3px;letter-spacing:-0.359px;">82.1%</div>
<div class="t" style="left:440.25px;top:672.95px;font-size:9.5px;color:#ccccdc;-webkit-text-stroke:0.3px;letter-spacing:-0.359px;">34.0%</div>
<div class="t" style="left:546.25px;top:691.86px;font-size:9.5px;color:#ccccdc;-webkit-text-stroke:0.3px;letter-spacing:-0.359px;">17.9%</div>
<div class="t" style="left:594.25px;top:632.86px;font-size:9.5px;color:#ccccdc;-webkit-text-stroke:0.3px;letter-spacing:-0.359px;">66.0%</div>
<div class="t" style="left:341.70px;top:757.07px;font-size:13px;color:#ccccdc;-webkit-text-stroke:0.55px;letter-spacing:0.180px;">Highest difference</div>
<svg style="left:678.3px;top:757.500px" width="15" height="15" viewBox="0 0 15 15" fill="none" stroke="#6e9fff" stroke-width="1.300" stroke-linecap="round"><circle cx="6.500" cy="6.500" r="4.800"/><path d="M10.200 10.200L13.300 13.300M4.500 6.500h4M6.500 4.500v4"/></svg>
<div class="t" style="left:701.80px;top:758.17px;font-size:13px;color:#6e9fff;-webkit-text-stroke:0.55px;letter-spacing:0.211px;">Add to filters</div>
<div class="t" style="left:500.75px;top:785.62px;font-size:38px;color:#c8c9d8;letter-spacing:-1.037px;font-weight:bold;">48.13%</div>
<div class="t" style="left:541.40px;top:834.97px;font-size:13px;color:#ccccdc;-webkit-text-stroke:0.3px;letter-spacing:-0.324px;">&quot;POST&quot;</div>
<div class="panel" style="left:802px;top:556px;width:462px;height:304px;border-radius:6px 6px 0 0"></div>
<div class="abs" style="left:802px;top:742.500px;width:462px;height:2px;background:#292b31"></div>
<div class="t" style="left:811.20px;top:565.61px;font-size:14.5px;color:#ccccdc;-webkit-text-stroke:0.55px;letter-spacing:0.509px;">instrumentation:name</div>
<div class="btn" style="left:1195.8px;top:561.500px;width:58.500px;height:23.500px;border-radius:5px;background:#2a2d32;border-color:#2f3137"></div>
<div class="t" style="left:1203.10px;top:566.62px;font-size:12.5px;color:#ccccdc;-webkit-text-stroke:0.55px;letter-spacing:0.566px;">Inspect</div>
<svg style="left:0;top:0" width="1295" height="894" viewBox="0 0 1295 894" shape-rendering="crispEdges">
<rect x="847.8" y="605" width="407" height="1" fill="#2b2d33"/>
<rect x="847.8" y="629" width="407" height="1" fill="#2b2d33"/>
<rect x="847.8" y="654" width="407" height="1" fill="#2b2d33"/>
<rect x="847.8" y="678" width="407" height="1" fill="#2b2d33"/>
<rect x="847.8" y="703" width="407" height="1" fill="#2b2d33"/>
<rect x="847.8" y="727" width="407" height="1" fill="#2b2d33"/>
<rect x="853.2" y="677.8" width="33.5" height="49.5" fill="#4a7cc9" shape-rendering="auto"/>
<rect x="889.8" y="720.5" width="32.5" height="6.8" fill="#d5812f" stroke="#ff9830" stroke-width="1" shape-rendering="auto"/>
<rect x="963.2" y="661.0" width="33.8" height="66.3" fill="#4a7cc9" shape-rendering="auto"/>
<rect x="1000.8" y="646.5" width="32.9" height="80.8" fill="#d5812f" stroke="#ff9830" stroke-width="1" shape-rendering="auto"/>
<rect x="1074.2" y="719.0" width="33.5" height="8.3" fill="#4a7cc9" shape-rendering="auto"/>
<rect x="1110.8" y="692.5" width="32.4" height="34.8" fill="#d5812f" stroke="#ff9830" stroke-width="1" shape-rendering="auto"/>
</svg>
<div class="t" style="left:809.53px;top:598.52px;font-size:12.5px;color:#ccccdc;-webkit-text-stroke:0.3px;">100%</div>
<div class="t" style="left:816.48px;top:623.02px;font-size:12.5px;color:#ccccdc;-webkit-text-stroke:0.3px;">80%</div>
<div class="t" style="left:816.48px;top:647.52px;font-size:12.5px;color:#ccccdc;-webkit-text-stroke:0.3px;">60%</div>
<div class="t" style="left:816.48px;top:672.02px;font-size:12.5px;color:#ccccdc;-webkit-text-stroke:0.3px;">40%</div>
<div class="t" style="left:816.48px;top:696.52px;font-size:12.5px;color:#ccccdc;-webkit-text-stroke:0.3px;">20%</div>
<div class="t" style="left:823.43px;top:721.02px;font-size:12.5px;color:#ccccdc;-webkit-text-stroke:0.3px;">0%</div>
<div class="t" style="left:811.20px;top:757.07px;font-size:13px;color:#ccccdc;-webkit-text-stroke:0.55px;letter-spacing:0.180px;">Highest difference</div>
<svg style="left:1147.8px;top:757.500px" width="15" height="15" viewBox="0 0 15 15" fill="none" stroke="#6e9fff" stroke-width="1.300" stroke-linecap="round"><circle cx="6.500" cy="6.500" r="4.800"/><path d="M10.200 10.200L13.300 13.300M4.500 6.500h4M6.500 4.500v4"/></svg>
<div class="t" style="left:1171.30px;top:758.17px;font-size:13px;color:#6e9fff;-webkit-text-stroke:0.55px;letter-spacing:0.211px;">Add to filters</div>
<div class="t" style="left:965.10px;top:785.62px;font-size:38px;color:#c8c9d8;letter-spacing:1.023px;font-weight:bold;">34.28%</div>
<div class="t" style="left:957.05px;top:834.97px;font-size:13px;color:#ccccdc;-webkit-text-stroke:0.3px;letter-spacing:0.244px;">&quot;github.com/uptrace/bun&quot;</div>
<svg style="left:1140px;top:592px" width="26" height="30" viewBox="1140 592 26 30"><path d="M1148 599.300V612.800L1151.200 610.100L1153.300 615.300L1155.900 614.200L1153.700 609.100L1157.600 608.800Z" fill="#000" stroke="#f2f2f2" stroke-width="0.9" stroke-linejoin="round"/></svg>
<div class="abs" style="left:1280.500px;top:40px;width:14.500px;height:854px;background:#2c2c2c;border-left:1px solid #3c3c3c"></div>
<div class="abs" style="left:1284px;top:43px;width:8px;height:100px;border-radius:4px;background:#6b6b6b"></div>
</div>
</body></html>
